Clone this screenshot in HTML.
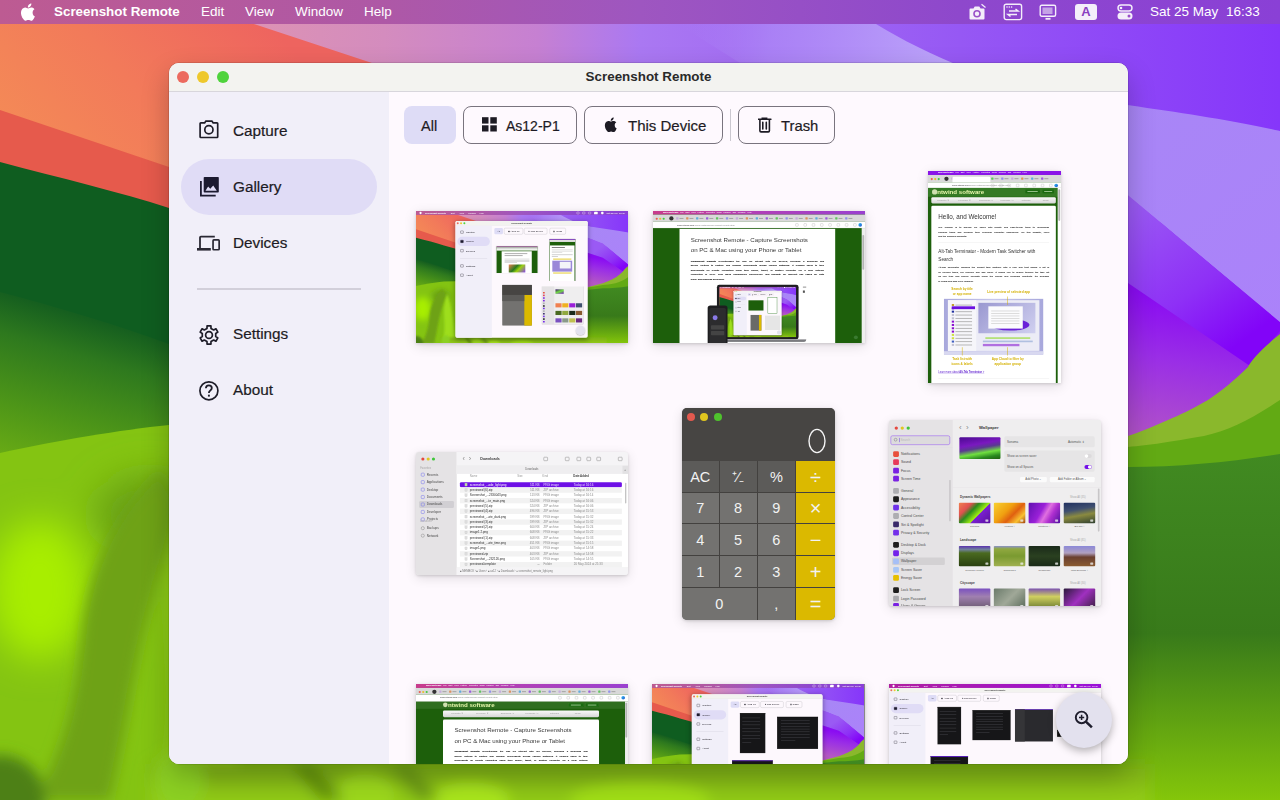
<!DOCTYPE html>
<html><head><meta charset="utf-8">
<style>
*{box-sizing:border-box;margin:0;padding:0}
html,body{width:1280px;height:800px;overflow:hidden;font-family:"Liberation Sans",sans-serif}
body{position:relative;background:#8a40f0}
.abs{position:absolute}
#wp{position:absolute;left:0;top:0}
.menubar{position:absolute;left:0;top:0;width:1280px;height:24px;background:linear-gradient(90deg,#bd5b92 0%,#ae58a6 30%,#9e56c0 50%,#8e48cc 75%,#8a40d6 100%);color:#fff;font-size:13.5px}
.menubar span{position:absolute;top:4px;line-height:16px;white-space:nowrap}
.win{position:absolute;left:169px;top:63px;width:959px;height:701px;border-radius:10px;overflow:hidden;background:#fef9fe;box-shadow:0 0 0 0.5px rgba(0,0,0,.2),0 12px 28px rgba(0,0,0,.24)}
.titlebar{position:absolute;left:0;top:0;width:959px;height:29px;background:#f3f3f0;border-bottom:1px solid #d8d6dc}
.tl{position:absolute;top:8px;width:12px;height:12px;border-radius:50%}
.title{position:absolute;left:0;top:6px;width:959px;text-align:center;font-weight:bold;font-size:13.4px;color:#2a2a2a;line-height:16px}
.sidebar{position:absolute;left:0;top:29px;width:220px;height:672px;background:#f1eff9}
.nav{position:absolute;left:12px;width:196px;height:56px;border-radius:28px}
.nav.sel{background:#e0dcf6}
.nav svg{position:absolute;left:17px;top:18px}
.nav span{position:absolute;left:52px;top:19px;font-size:15.3px;line-height:18px;color:#1d1b24;-webkit-text-stroke:.2px #1d1b24}
.main{position:absolute;left:220px;top:29px;width:739px;height:672px;background:#fef9fe;overflow:hidden}
.btn{position:absolute;top:14px;height:38px;border-radius:8px;border:1px solid #79747e;font-size:14.5px;color:#1d1b24}
.btn span{position:absolute;top:11px;line-height:17px;white-space:nowrap;-webkit-text-stroke:.2px #1d1b24}
.thumb{position:absolute;overflow:hidden;box-shadow:0 1px 3px rgba(0,0,0,.15),0 3px 12px rgba(0,0,0,.12)}
.fab{position:absolute;left:887px;top:629px;width:56px;height:56px;border-radius:50%;background:#e3e1ee;box-shadow:0 3px 8px rgba(0,0,0,.3)}
</style></head>
<body>
<svg id="wp" width="1280" height="800" viewBox="0 0 1280 800">
<defs>
<symbol id="wall" viewBox="0 0 1280 800">
  <defs>
    <linearGradient id="gTop" x1="0" y1="0" x2="1280" y2="0" gradientUnits="userSpaceOnUse">
      <stop offset="0.2" stop-color="#dc92b4"/>
      <stop offset="0.3" stop-color="#d48cbe"/>
      <stop offset="0.42" stop-color="#c680d2"/>
      <stop offset="0.5" stop-color="#aa78f2"/>
      <stop offset="0.75" stop-color="#9658f4"/>
      <stop offset="1" stop-color="#8636fa"/>
    </linearGradient>
    <linearGradient id="gOr" x1="20" y1="170" x2="230" y2="-20" gradientUnits="userSpaceOnUse">
      <stop offset="0" stop-color="#f48c56"/>
      <stop offset="0.5" stop-color="#f27a5a"/>
      <stop offset="1" stop-color="#ee645f"/>
    </linearGradient>
    <linearGradient id="gGreen" x1="0" y1="292" x2="-50" y2="460" gradientUnits="userSpaceOnUse">
      <stop offset="0" stop-color="#165f1f"/>
      <stop offset="0.22" stop-color="#2e791e"/>
      <stop offset="0.6" stop-color="#4e9618"/>
      <stop offset="1" stop-color="#72b214"/>
    </linearGradient>
    <linearGradient id="gLav" x1="1100" y1="100" x2="1280" y2="330" gradientUnits="userSpaceOnUse">
      <stop offset="0" stop-color="#a886f6"/>
      <stop offset="1" stop-color="#ab82fa"/>
    </linearGradient>
    <linearGradient id="gMag" x1="1128" y1="290" x2="1100" y2="440" gradientUnits="userSpaceOnUse">
      <stop offset="0" stop-color="#8a0cf2"/>
      <stop offset="0.4" stop-color="#9a2ee6"/>
      <stop offset="1" stop-color="#b458c4"/>
    </linearGradient>
    <linearGradient id="gRG" x1="0" y1="430" x2="0" y2="800" gradientUnits="userSpaceOnUse">
      <stop offset="0" stop-color="#428c22"/>
      <stop offset="0.55" stop-color="#387a1a"/>
      <stop offset="1" stop-color="#84c60a"/>
    </linearGradient>
    <linearGradient id="gBot" x1="0" y1="0" x2="1280" y2="0" gradientUnits="userSpaceOnUse">
      <stop offset="0" stop-color="#78b41a"/>
      <stop offset="0.2" stop-color="#84bf18"/>
      <stop offset="0.28" stop-color="#6e9c16"/>
      <stop offset="0.42" stop-color="#9cd416"/>
      <stop offset="0.5" stop-color="#86bc14"/>
      <stop offset="0.7" stop-color="#92c812"/>
      <stop offset="0.88" stop-color="#80b812"/>
      <stop offset="1" stop-color="#84c40a"/>
    </linearGradient>
    <linearGradient id="gMed" x1="1128" y1="210" x2="1230" y2="350" gradientUnits="userSpaceOnUse">
      <stop offset="0" stop-color="#9a5af4"/>
      <stop offset="0.6" stop-color="#8e30f6"/>
      <stop offset="1" stop-color="#8204f8"/>
    </linearGradient>
    <linearGradient id="gWave" x1="680" y1="0" x2="950" y2="30" gradientUnits="userSpaceOnUse">
      <stop offset="0" stop-color="#a878f4" stop-opacity="0"/>
      <stop offset="0.35" stop-color="#ac86f6" stop-opacity=".8"/>
      <stop offset="1" stop-color="#bca4fa"/>
    </linearGradient>
    <linearGradient id="gBotV" x1="0" y1="764" x2="0" y2="800" gradientUnits="userSpaceOnUse">
      <stop offset="0" stop-color="#7cac18"/>
      <stop offset="1" stop-color="#92cc16"/>
    </linearGradient>
    <filter id="fb2" x="-50%" y="-50%" width="200%" height="200%"><feGaussianBlur stdDeviation="7"/></filter>
    <filter id="fb" x="-50%" y="-50%" width="200%" height="200%"><feGaussianBlur stdDeviation="18"/></filter>
    <radialGradient id="gLime1" cx="45" cy="585" r="120" gradientUnits="userSpaceOnUse">
      <stop offset="0" stop-color="#a8ea08"/>
      <stop offset="1" stop-color="#a8ea08" stop-opacity="0"/>
    </radialGradient>
    <radialGradient id="gLime2" cx="160" cy="660" r="90" gradientUnits="userSpaceOnUse">
      <stop offset="0" stop-color="#a2e010"/>
      <stop offset="1" stop-color="#a2e010" stop-opacity="0"/>
    </radialGradient>
  </defs>
  <rect width="1280" height="800" fill="#8e44f2"/>
  <path d="M0 0 H1280 V260 L0 260 Z" fill="url(#gTop)"/>
  <path d="M640 0 L838 0 C900 40 1000 110 1280 131 L1280 324 C1220 270 1180 240 1163 224 C1000 120 860 90 740 63 Z" fill="url(#gWave)"/>
  <path d="M1000 86 C1050 96 1200 112 1280 131 L1280 322 L1128 195 L1000 150 Z" fill="url(#gLav)"/>
  <!-- orange band -->
  <path d="M0 -60 L254 24 L372 63 L1000 270 L1000 800 L0 800 Z" fill="url(#gOr)"/>
  <!-- red band -->
  <path d="M0 110 L169 167 L1000 447 L1000 800 L0 800 Z" fill="#e65a4c"/>
  <!-- green -->
  <path d="M0 162 C60 178 120 192 169 208 L700 355 L1000 440 L1000 800 L0 800 Z" fill="#0f5d20"/>
  <path d="M0 292 C60 308 120 326 169 344 L700 520 L1000 600 L1000 800 L0 800 Z" fill="url(#gGreen)"/>
<!-- medium purple -->
  <path d="M1000 150 L1128 195 L1280 322 L1280 345 L1248 367 L1128 284 L1000 240 Z" fill="url(#gMed)"/>
  <!-- deep purple / magenta -->
  <path d="M1000 240 L1128 283 L1250 366 L1280 331 L1280 800 L1000 800 Z" fill="url(#gMag)"/>
  <!-- right green hill -->
  <path d="M1280 334 C1260 350 1250 362 1248 367 C1235 380 1220 392 1208 400 C1190 410 1180 415 1168 420 C1150 428 1140 432 1128 436 L1000 470 L1000 800 L1280 800 Z" fill="#8ab82c"/>
  <path d="M1280 400 C1250 420 1230 430 1204 436 C1170 442 1150 445 1128 447 L1000 470 L1000 800 L1280 800 Z" fill="#62aa14"/>
  <path d="M1280 454 C1230 462 1180 467 1128 467 L1000 480 L1000 800 L1280 800 Z" fill="url(#gRG)"/>
  <!-- lime swirls left -->
  <path d="M0 453 C60 440 120 430 169 425 L1000 410 L1000 800 L0 800 Z" fill="#84c412"/>
  <g filter="url(#fb)">
  <ellipse cx="150" cy="515" rx="55" ry="40" fill="#68a012"/>
  <ellipse cx="40" cy="590" rx="50" ry="70" fill="#a8ee06"/>
  </g>
  <g filter="url(#fb2)">
  <path d="M160 470 C120 510 90 560 82 630 C76 700 64 750 34 800 L110 800 C125 740 135 660 150 610 C160 570 170 540 175 500 Z" fill="#6ea212"/>
  <ellipse cx="0" cy="800" rx="45" ry="45" fill="#4e8018"/>
  <path d="M190 500 C160 560 170 620 172 690 C172 730 168 760 160 780 L240 780 C230 700 220 600 190 500 Z" fill="#9ede1c"/>
  </g>
  <g filter="url(#fb2)">
  <rect x="150" y="764" width="1000" height="60" fill="url(#gBotV)"/>
  <ellipse cx="180" cy="780" rx="25" ry="30" fill="#8cd022"/>
  <ellipse cx="365" cy="795" rx="30" ry="22" fill="#9cd81a"/>
  <ellipse cx="470" cy="800" rx="40" ry="18" fill="#a8e41a"/>
  <ellipse cx="640" cy="800" rx="70" ry="18" fill="#a0de12"/>
  <path d="M290 764 L312 764 L345 800 L320 800 Z" fill="#64920f"/>
  <path d="M390 764 L410 764 L440 800 L418 800 Z" fill="#6c9a12"/>
  </g>

</symbol>
</defs>
<use href="#wall" x="0" y="0" width="1280" height="800"/>
</svg>

<div class="menubar">
  <svg class="abs" style="left:19.5px;top:3px" width="15.5" height="17.6" viewBox="0 0 15 17"><path fill="#fff" d="M12.2 9.1c0-2 1.7-3 1.8-3.1-1-1.4-2.5-1.6-3-1.6-1.3-.1-2.5.8-3.1.8-.7 0-1.7-.8-2.8-.8C3.7 4.5 2.4 5.3 1.7 6.6.2 9.200 1.300 13.000 2.800 15.100c.7 1 1.500 2.100 2.600 2.100 1 0 1.400-.700 2.700-.700 1.200 0 1.600.700 2.700.700s1.800-1 2.500-2c.8-1.100 1.100-2.200 1.100-2.300 0 0-2.200-.8-2.200-3.300zM10.100 3.100c.6-.7 1-1.700.9-2.700-.9 0-1.900.6-2.500 1.300-.6.6-1 1.600-.9 2.600 1 .1 1.900-.5 2.500-1.200z"/></svg>
  <span style="left:54px;font-weight:bold;font-size:13.4px">Screenshot Remote</span>
  <span style="left:201px">Edit</span>
  <span style="left:245px">View</span>
  <span style="left:295px">Window</span>
  <span style="left:364px">Help</span>
  <svg class="abs" style="left:968px;top:3px" width="19" height="18" viewBox="0 0 19 18"><path d="M2.5 5.5 Q1.5 5.5 1.5 6.5 V15.5 Q1.5 16.6 2.6 16.6 H15.4 Q16.5 16.6 16.5 15.5 V6.5 Q16.5 5.5 15.5 5.5 H12.5 L11.3 3.6 H6.7 L5.5 5.5 Z" fill="#f4eefa"/><circle cx="9" cy="10.8" r="3" fill="none" stroke="#9a50c8" stroke-width="1.6"/><path d="M13.5 1.2 L17.5 4.5" stroke="#f4eefa" stroke-width="1.2"/></svg>
  <svg class="abs" style="left:1003px;top:3px" width="20" height="18" viewBox="0 0 20 18"><rect x="1.2" y="1.2" width="17.4" height="15.4" rx="2" fill="none" stroke="#f4eefa" stroke-width="1.4"/><circle cx="4" cy="4" r=".8" fill="#f4eefa"/><circle cx="6.3" cy="4" r=".8" fill="#f4eefa"/><circle cx="8.6" cy="4" r=".8" fill="#f4eefa"/><path d="M6 8 H15 L12.5 6 M14 11.5 H5 L7.5 13.5" fill="none" stroke="#f4eefa" stroke-width="1.5"/></svg>
  <svg class="abs" style="left:1039px;top:4px" width="18" height="17" viewBox="0 0 18 17"><rect x="1.2" y="1.2" width="15.4" height="11" rx="1.5" fill="none" stroke="#f4eefa" stroke-width="1.4"/><rect x="3.5" y="3.5" width="10" height="6.5" fill="#f4eefa" opacity=".55"/><path d="M6.5 14.8 H11.5" stroke="#f4eefa" stroke-width="1.8"/></svg>
  <div class="abs" style="left:1075px;top:4px;width:22px;height:16px;border-radius:3px;background:#f4eefa;color:#8a40c0;font-weight:bold;font-size:13px;line-height:16px;text-align:center">A</div>
  <svg class="abs" style="left:1117px;top:4px" width="16" height="16" viewBox="0 0 16 16"><rect x="1" y="1" width="14" height="6" rx="3" fill="none" stroke="#f4eefa" stroke-width="1.4"/><circle cx="4" cy="4" r="1.3" fill="#f4eefa"/><rect x="0.5" y="8.5" width="15" height="7" rx="3.5" fill="#f4eefa"/><circle cx="12" cy="12" r="1.5" fill="#9a50c8"/></svg>
  <span style="left:1150px">Sat 25 May</span>
  <span style="left:1226px">16:33</span>
</div>

<div class="win">
  <div class="titlebar">
    <div class="tl" style="left:8px;background:#ec6a5e"></div>
    <div class="tl" style="left:28px;background:#eec82c"></div>
    <div class="tl" style="left:48px;background:#4fd33c"></div>
    <div class="title">Screenshot Remote</div>
  </div>
  <div class="sidebar">
    <div class="nav" style="top:11px">
      <svg style="left:18px;top:17px" width="20" height="19" viewBox="0 0 20 19"><path d="M1.1 3.6 Q1.1 2.9 1.8 2.9 H5.6 L6.9 1.1 H12.9 L14.2 2.9 H18 Q18.7 2.9 18.7 3.6 V16.7 Q18.7 17.5 18 17.5 H1.8 Q1.1 17.5 1.1 16.7 Z" fill="none" stroke="#1e1d29" stroke-width="1.7" stroke-linejoin="round"/><circle cx="9.9" cy="9.75" r="4.1" fill="none" stroke="#1e1d29" stroke-width="1.7"/></svg>
      <span>Capture</span></div>
    <div class="nav sel" style="top:67px">
      <svg style="left:18px;top:17px" width="22" height="22" viewBox="0 0 22 22"><path d="M4.7 1.8 Q4.7 1 5.5 1 H19 Q19.8 1 19.8 1.8 V15.8 Q19.8 16.6 19 16.6 H5.5 Q4.7 16.6 4.7 15.8 Z" fill="#1c1a30"/><path d="M6.5 14.7 L9.1 10.6 L11.3 12.8 L14.2 9.4 L17.8 14.7 Z" fill="#e0dcf6"/><path d="M1.9 5 V19.7 H16.7" fill="none" stroke="#1c1a30" stroke-width="1.8"/></svg>
      <span>Gallery</span></div>
    <div class="nav" style="top:123px">
      <svg style="left:15px;top:20px" width="26" height="18" viewBox="0 0 26 18"><path d="M26 0" /><path d="M18.8 1.6 H4.9 Q4 1.6 4 2.5 V13.2" fill="none" stroke="#2a2834" stroke-width="1.8"/><rect x="1" y="13" width="13.8" height="2.6" fill="#2a2834"/><rect x="17.05" y="4.85" width="6.1" height="9.9" rx="0.8" fill="none" stroke="#2a2834" stroke-width="1.7"/></svg>
      <span>Devices</span></div>
    <div class="abs" style="left:28px;top:196px;width:164px;height:2px;background:#d2cfda"></div>
    <div class="nav" style="top:214px">
      <svg style="left:18px;top:18.7px;overflow:visible" width="20" height="20" viewBox="0 0 20 20"><path d="M7.98 3.40 L8.07 0.90 L11.93 0.90 L12.02 3.40 L14.71 4.95 L16.91 3.78 L18.84 7.13 L16.72 8.45 L16.72 11.55 L18.84 12.87 L16.91 16.22 L14.71 15.05 L12.02 16.60 L11.93 19.10 L8.07 19.10 L7.98 16.60 L5.29 15.05 L3.09 16.22 L1.16 12.87 L3.28 11.55 L3.28 8.45 L1.16 7.13 L3.09 3.78 L5.29 4.95Z" fill="none" stroke="#1e1d29" stroke-width="1.7" stroke-linejoin="round"/><circle cx="10" cy="10" r="3.4" fill="none" stroke="#1e1d29" stroke-width="1.7"/></svg>
      <span>Settings</span></div>
    <div class="nav" style="top:270px">
      <svg style="left:17px;top:18px;overflow:visible" width="22" height="22" viewBox="0 0 22 22"><circle cx="10.9" cy="10.8" r="9.0" fill="none" stroke="#1e1d29" stroke-width="1.7"/><path d="M7.9 8.3 Q7.9 5.3 10.9 5.3 Q13.8 5.3 13.8 8 Q13.8 9.4 12.3 10.4 Q10.9 11.3 10.9 13" fill="none" stroke="#1e1d29" stroke-width="1.8"/><rect x="9.95" y="14.7" width="1.9" height="1.9" fill="#1e1d29"/></svg>
      <span>About</span></div>
  </div>
  <div class="main">
    <div class="btn" style="left:15px;width:52px;border:none;background:#dedcf6"><span style="left:17px;top:12px">All</span></div>
    <div class="btn" style="left:74px;width:114px">
      <svg class="abs" style="left:18px;top:10px" width="16" height="16" viewBox="0 0 16 16"><rect x="0" y="0.2" width="6.5" height="6.4" fill="#1d1b24"/><rect x="8.3" y="0.2" width="6.5" height="6.4" fill="#1d1b24"/><rect x="0" y="8.3" width="6.5" height="6.2" fill="#1d1b24"/><rect x="8.3" y="8.3" width="6.5" height="6.2" fill="#1d1b24"/></svg>
      <span style="left:42px;font-size:14px">As12-P1</span></div>
    <div class="btn" style="left:195px;width:139px">
      <svg class="abs" style="left:18.8px;top:10px" width="13.2" height="15" viewBox="0 0 15 17"><path fill="#1d1b24" d="M12.2 9.1c0-2 1.7-3 1.8-3.1-1-1.4-2.5-1.6-3-1.6-1.3-.1-2.5.8-3.1.8-.7 0-1.7-.8-2.8-.8C3.7 4.5 2.4 5.3 1.7 6.6.2 9.2 1.3 13 2.8 15.1c.7 1 1.5 2.1 2.6 2.1 1 0 1.4-.7 2.7-.7 1.2 0 1.6.7 2.7.7s1.8-1 2.5-2c.8-1.1 1.1-2.2 1.1-2.3 0 0-2.2-.8-2.2-3.3zM10.1 3.1c.6-.7 1-1.7.9-2.7-.9 0-1.9.6-2.5 1.3-.6.6-1 1.6-.9 2.6 1 .1 1.9-.5 2.5-1.2z"/></svg>
      <span style="left:43px;font-size:15px;top:10px">This Device</span></div>
    <div class="abs" style="left:341px;top:17px;width:1px;height:32px;background:#cbc8d0"></div>
    <div class="btn" style="left:349px;width:97px">
      <svg class="abs" style="left:19px;top:10px" width="16" height="17" viewBox="0 0 16 17"><path d="M0.2 2.3 H12.9 M4.3 2.3 V1.2 H8.6 V2.3 M1.9 2.3 V13.8 Q1.9 14.9 3 14.9 H10.3 Q11.4 14.9 11.4 13.8 V2.3 M4.8 5.4 V11.9 M8.3 5.4 V11.9" fill="none" stroke="#1d1b24" stroke-width="1.6" stroke-linecap="round"/></svg>
      <span style="left:42px;font-size:14.8px">Trash</span></div>

    <div class="thumb" id="t1" style="left:27px;top:119px;width:212px;height:132px;background:#888"><div class="abs" style="left:0;top:0;width:1280px;height:800px;transform:scale(0.165625);transform-origin:0 0"><svg class="abs" style="left:0;top:0" width="1280" height="800" viewBox="0 0 1280 800"><use href="#wall" width="1280" height="800"/></svg><div class="abs" style="left:0;top:0;width:1280px;height:24px;background:linear-gradient(90deg,#bd5b92 0%,#ae58a6 30%,#9e56c0 50%,#8e48cc 75%,#8a40d6 100%);color:#fff;font-size:13.5px;line-height:24px"><div class="abs" style="left:21px;top:5px;width:13px;height:14px;border-radius:50% 50% 45% 45%;background:#fff"></div><span class="abs" style="left:54px;font-weight:bold">Screenshot Remote</span><span class="abs" style="left:210px">Edit</span><span class="abs" style="left:262px">View</span><span class="abs" style="left:314px">Window</span><span class="abs" style="left:382px">Help</span><div class="abs" style="left:970px;top:5px;width:16px;height:14px;border:2px solid #fff;border-radius:3px"></div><div class="abs" style="left:1005px;top:5px;width:16px;height:14px;border:2px solid #fff;border-radius:3px"></div><div class="abs" style="left:1040px;top:5px;width:16px;height:14px;border:2px solid #fff;border-radius:3px"></div><div class="abs" style="left:1075px;top:4px;width:22px;height:16px;border-radius:3px;background:#fff"></div><div class="abs" style="left:1118px;top:5px;width:14px;height:14px;border-radius:4px;background:#fff"></div><span class="abs" style="left:1150px">Sat 25 May&nbsp;&nbsp;16:33</span></div><div class="abs" style="left:238px;top:60px;width:799px;height:705px;border-radius:10px;overflow:hidden;background:#fdf8fd;box-shadow:0 8px 30px rgba(0,0,0,.35);"><div class="abs" style="left:0;top:0;width:799px;height:28px;background:#f3f3f0;border-bottom:1px solid #d8d6dc"></div><div class="abs" style="left:8px;top:8px;width:12px;height:12px;border-radius:50%;background:#ec6a5e"></div><div class="abs" style="left:28px;top:8px;width:12px;height:12px;border-radius:50%;background:#eec82c"></div><div class="abs" style="left:48px;top:8px;width:12px;height:12px;border-radius:50%;background:#4fd33c"></div><div class="abs" style="left:0;top:6px;width:799px;text-align:center;font-weight:bold;font-size:13.4px;color:#3b3b3b">Screenshot Remote</div><div class="abs" style="left:0;top:29px;width:220px;height:676px;background:#f1eff9"></div><div class="abs" style="left:12px;top:96px;width:196px;height:56px;border-radius:28px;background:#e0dcf6"></div><div class="abs" style="left:30px;top:59px;width:19px;height:17px;border:2px solid #2a2834;border-radius:3px;"></div><div class="abs" style="left:64px;top:59px;font-size:15.3px;line-height:18px;color:#1d1b24">Capture</div><div class="abs" style="left:30px;top:115px;width:19px;height:17px;border:2px solid #2a2834;border-radius:3px;background:#1c1a30;"></div><div class="abs" style="left:64px;top:115px;font-size:15.3px;line-height:18px;color:#1d1b24">Gallery</div><div class="abs" style="left:30px;top:171px;width:19px;height:17px;border:2px solid #2a2834;border-radius:3px;"></div><div class="abs" style="left:64px;top:171px;font-size:15.3px;line-height:18px;color:#1d1b24">Devices</div><div class="abs" style="left:30px;top:263px;width:19px;height:17px;border:2px solid #2a2834;border-radius:3px;"></div><div class="abs" style="left:64px;top:263px;font-size:15.3px;line-height:18px;color:#1d1b24">Settings</div><div class="abs" style="left:30px;top:319px;width:19px;height:17px;border:2px solid #2a2834;border-radius:3px;"></div><div class="abs" style="left:64px;top:319px;font-size:15.3px;line-height:18px;color:#1d1b24">About</div><div class="abs" style="left:28px;top:225px;width:164px;height:2px;background:#d2cfda"></div><div class="abs" style="left:235px;top:43px;width:52px;height:38px;border-radius:8px;background:#dedcf6;font-size:14.5px;line-height:38px;text-align:center;color:#1d1b24">All</div><div class="abs" style="left:294px;top:43px;width:114px;height:38px;border-radius:8px;border:1px solid #79747e;font-size:14.5px;line-height:36px;text-align:center;color:#1d1b24">&#9638; As12-P1</div><div class="abs" style="left:415px;top:43px;width:139px;height:38px;border-radius:8px;border:1px solid #79747e;font-size:14.5px;line-height:36px;text-align:center;color:#1d1b24">&#9679; This Device</div><div class="abs" style="left:569px;top:43px;width:97px;height:38px;border-radius:8px;border:1px solid #79747e;font-size:14.5px;line-height:36px;text-align:center;color:#1d1b24">&#9641; Trash</div><div class="abs" style="left:247px;top:153px;width:250px;height:162px;overflow:hidden;box-shadow:0 1px 4px rgba(0,0,0,.3)"><div class="abs" style="left:0px;top:0px;width:250px;height:162px;background:#1d5f0b"></div><div class="abs" style="left:0px;top:0px;width:250px;height:6px;background:#b040b0"></div><div class="abs" style="left:0px;top:6px;width:250px;height:11px;background:#d8d8d8"></div><div class="abs" style="left:0px;top:17px;width:250px;height:9px;background:#fff"></div><div class="abs" style="left:32px;top:30px;width:182px;height:162px;background:#fff"></div><div class="abs" style="left:50px;top:43px;width:137px;height:4px;background:#888"></div><div class="abs" style="left:50px;top:55px;width:109px;height:4px;background:#888"></div><div class="abs" style="left:50px;top:76px;width:150px;height:2px;background:#999"></div><div class="abs" style="left:50px;top:83px;width:150px;height:2px;background:#999"></div><div class="abs" style="left:50px;top:90px;width:150px;height:2px;background:#999"></div><div class="abs" style="left:50px;top:97px;width:75px;height:2px;background:#999"></div><div class="abs" style="left:75px;top:110px;width:100px;height:48px;background:linear-gradient(135deg,#f08050,#2a7a20 40%,#9ad010 60%,#8a40f0)"></div></div><div class="abs" style="left:567px;top:108px;width:158px;height:254px;overflow:hidden;box-shadow:0 1px 4px rgba(0,0,0,.3)"><div class="abs" style="left:0px;top:0px;width:158px;height:254px;background:#1d5f0b"></div><div class="abs" style="left:0px;top:0px;width:158px;height:6px;background:#8a20e0"></div><div class="abs" style="left:0px;top:6px;width:158px;height:13px;background:#e0e0e0"></div><div class="abs" style="left:4px;top:40px;width:148px;height:254px;background:#fff"></div><div class="abs" style="left:15px;top:50px;width:79px;height:5px;background:#666"></div><div class="abs" style="left:15px;top:66px;width:126px;height:2px;background:#aaa"></div><div class="abs" style="left:15px;top:73px;width:126px;height:2px;background:#aaa"></div><div class="abs" style="left:15px;top:80px;width:63px;height:2px;background:#aaa"></div><div class="abs" style="left:15px;top:96px;width:126px;height:2px;background:#777"></div><div class="abs" style="left:15px;top:104px;width:37px;height:2px;background:#777"></div><div class="abs" style="left:18px;top:132px;width:120px;height:66px;background:#9a88d8"></div><div class="abs" style="left:63px;top:139px;width:66px;height:40px;background:#f4f4f8"></div><div class="abs" style="left:23px;top:119px;width:110px;height:7px;background:#e0c000;opacity:.7"></div><div class="abs" style="left:23px;top:203px;width:110px;height:7px;background:#e0c000;opacity:.7"></div></div><div class="abs" style="left:282px;top:385px;width:180px;height:248px;overflow:hidden"><div class="abs" style="left:0px;top:0px;width:180px;height:248px;background:#737270;border-radius:4px"></div><div class="abs" style="left:0px;top:0px;width:180px;height:62px;background:#474543"></div><div class="abs" style="left:134px;top:62px;width:46px;height:186px;background:#dbb900"></div><div class="abs" style="left:0px;top:62px;width:134px;height:37px;background:#5c5b59"></div></div><div class="abs" style="left:522px;top:395px;width:250px;height:228px;overflow:hidden;box-shadow:0 1px 4px rgba(0,0,0,.3)"><div class="abs" style="left:0px;top:0px;width:250px;height:228px;background:#efeeef"></div><div class="abs" style="left:0px;top:0px;width:75px;height:228px;background:#e5e3e5"></div><div class="abs" style="left:7px;top:34px;width:10px;height:9px;background:#e8503c"></div><div class="abs" style="left:7px;top:50px;width:10px;height:9px;background:#e63c5c"></div><div class="abs" style="left:7px;top:66px;width:10px;height:9px;background:#7a22e2"></div><div class="abs" style="left:7px;top:82px;width:10px;height:9px;background:#7a22e2"></div><div class="abs" style="left:7px;top:98px;width:10px;height:9px;background:#adadb1"></div><div class="abs" style="left:7px;top:114px;width:10px;height:9px;background:#1d1d1d"></div><div class="abs" style="left:7px;top:129px;width:10px;height:9px;background:#6e32ea"></div><div class="abs" style="left:7px;top:145px;width:10px;height:9px;background:#adadb1"></div><div class="abs" style="left:7px;top:161px;width:10px;height:9px;background:#3a2a6a"></div><div class="abs" style="left:7px;top:177px;width:10px;height:9px;background:#7430ea"></div><div class="abs" style="left:7px;top:193px;width:10px;height:9px;background:#1d1d1d"></div><div class="abs" style="left:7px;top:209px;width:10px;height:9px;background:#7422ea"></div><div class="abs" style="left:82px;top:18px;width:50px;height:27px;background:linear-gradient(160deg,#3a0a70,#70e040,#7010c0)"></div><div class="abs" style="left:82px;top:102px;width:37px;height:25px;background:#f08050"></div><div class="abs" style="left:123px;top:102px;width:37px;height:25px;background:#f0b020"></div><div class="abs" style="left:165px;top:102px;width:37px;height:25px;background:#9a20d8"></div><div class="abs" style="left:206px;top:102px;width:37px;height:25px;background:#405070"></div><div class="abs" style="left:82px;top:148px;width:37px;height:25px;background:#4a6a20"></div><div class="abs" style="left:123px;top:148px;width:37px;height:25px;background:#90a840"></div><div class="abs" style="left:165px;top:148px;width:37px;height:25px;background:#1a2a1a"></div><div class="abs" style="left:206px;top:148px;width:37px;height:25px;background:#8a5a30"></div><div class="abs" style="left:82px;top:193px;width:37px;height:25px;background:#7a50c0"></div><div class="abs" style="left:123px;top:193px;width:37px;height:25px;background:#8a9a8a"></div><div class="abs" style="left:165px;top:193px;width:37px;height:25px;background:#c0c050"></div><div class="abs" style="left:206px;top:193px;width:37px;height:25px;background:#6a2a80"></div></div><div class="abs" style="left:727px;top:633px;width:56px;height:56px;border-radius:50%;background:#e3e1ee;box-shadow:0 3px 8px rgba(0,0,0,.3)"></div></div></div></div>
    <div class="thumb" id="t2" style="left:264px;top:119px;width:212px;height:132px;background:#1a6a12"><div class="abs" style="left:0;top:0;width:1280px;height:800px;transform:scale(.165625);transform-origin:0 0;background:#1d5f0b"><div class="abs" style="left:0px;top:0px;width:1280px;height:22px;background:linear-gradient(90deg,#c83c8c 0%,#b040b8 50%,#9a40d0 100%)"></div><div class="abs" style="left:60px;top:2px;font-size:13px;line-height:18px;color:#fff;white-space:nowrap"><b>Microsoft Edge</b>&nbsp;&nbsp;&nbsp;File&nbsp;&nbsp;&nbsp;Edit&nbsp;&nbsp;&nbsp;View&nbsp;&nbsp;&nbsp;History&nbsp;&nbsp;&nbsp;Favorites&nbsp;&nbsp;&nbsp;Tools&nbsp;&nbsp;&nbsp;Profiles&nbsp;&nbsp;&nbsp;Tab&nbsp;&nbsp;&nbsp;Window&nbsp;&nbsp;&nbsp;Help</div><div class="abs" style="left:0px;top:22px;width:1280px;height:43px;background:#d9d9d9"></div><div class="abs" style="left:16px;top:40px;width:13px;height:13px;border-radius:50%;background:#ec5a50"></div><div class="abs" style="left:37px;top:40px;width:13px;height:13px;border-radius:50%;background:#e8c028"></div><div class="abs" style="left:58px;top:40px;width:13px;height:13px;border-radius:50%;background:#40c840"></div><div class="abs" style="left:98px;top:32px;width:26px;height:26px;border-radius:50%;background:#333"></div><div class="abs" style="left:140px;top:37px;width:14px;height:14px;border-radius:3px;background:#c0a0e0;opacity:.8"></div><div class="abs" style="left:160px;top:42px;width:24px;height:5px;background:#999"></div><div class="abs" style="left:200px;top:37px;width:14px;height:14px;border-radius:3px;background:#e08040;opacity:.8"></div><div class="abs" style="left:220px;top:42px;width:24px;height:5px;background:#999"></div><div class="abs" style="left:260px;top:37px;width:14px;height:14px;border-radius:3px;background:#40a0e0;opacity:.8"></div><div class="abs" style="left:280px;top:42px;width:24px;height:5px;background:#999"></div><div class="abs" style="left:320px;top:37px;width:14px;height:14px;border-radius:3px;background:#8a40e0;opacity:.8"></div><div class="abs" style="left:340px;top:42px;width:24px;height:5px;background:#999"></div><div class="abs" style="left:380px;top:37px;width:14px;height:14px;border-radius:3px;background:#40c040;opacity:.8"></div><div class="abs" style="left:400px;top:42px;width:24px;height:5px;background:#999"></div><div class="abs" style="left:440px;top:37px;width:14px;height:14px;border-radius:3px;background:#8080f0;opacity:.8"></div><div class="abs" style="left:460px;top:42px;width:24px;height:5px;background:#999"></div><div class="abs" style="left:500px;top:37px;width:14px;height:14px;border-radius:3px;background:#c0a0e0;opacity:.8"></div><div class="abs" style="left:520px;top:42px;width:24px;height:5px;background:#999"></div><div class="abs" style="left:560px;top:37px;width:14px;height:14px;border-radius:3px;background:#e08040;opacity:.8"></div><div class="abs" style="left:580px;top:42px;width:24px;height:5px;background:#999"></div><div class="abs" style="left:620px;top:37px;width:14px;height:14px;border-radius:3px;background:#40a0e0;opacity:.8"></div><div class="abs" style="left:640px;top:42px;width:24px;height:5px;background:#999"></div><div class="abs" style="left:680px;top:37px;width:14px;height:14px;border-radius:3px;background:#8a40e0;opacity:.8"></div><div class="abs" style="left:700px;top:42px;width:24px;height:5px;background:#999"></div><div class="abs" style="left:740px;top:37px;width:14px;height:14px;border-radius:3px;background:#40c040;opacity:.8"></div><div class="abs" style="left:760px;top:42px;width:24px;height:5px;background:#999"></div><div class="abs" style="left:800px;top:37px;width:14px;height:14px;border-radius:3px;background:#8080f0;opacity:.8"></div><div class="abs" style="left:820px;top:42px;width:24px;height:5px;background:#999"></div><div class="abs" style="left:860px;top:37px;width:14px;height:14px;border-radius:3px;background:#c0a0e0;opacity:.8"></div><div class="abs" style="left:880px;top:42px;width:24px;height:5px;background:#999"></div><div class="abs" style="left:920px;top:37px;width:14px;height:14px;border-radius:3px;background:#e08040;opacity:.8"></div><div class="abs" style="left:940px;top:42px;width:24px;height:5px;background:#999"></div><div class="abs" style="left:980px;top:37px;width:14px;height:14px;border-radius:3px;background:#40a0e0;opacity:.8"></div><div class="abs" style="left:1000px;top:42px;width:24px;height:5px;background:#999"></div><div class="abs" style="left:1040px;top:37px;width:14px;height:14px;border-radius:3px;background:#8a40e0;opacity:.8"></div><div class="abs" style="left:1060px;top:42px;width:24px;height:5px;background:#999"></div><div class="abs" style="left:1100px;top:37px;width:14px;height:14px;border-radius:3px;background:#40c040;opacity:.8"></div><div class="abs" style="left:1120px;top:42px;width:24px;height:5px;background:#999"></div><div class="abs" style="left:1160px;top:37px;width:14px;height:14px;border-radius:3px;background:#8080f0;opacity:.8"></div><div class="abs" style="left:1180px;top:42px;width:24px;height:5px;background:#999"></div><div class="abs" style="left:0px;top:65px;width:1280px;height:38px;background:#fff;border-bottom:1px solid #ccc"></div><div class="abs" style="left:145px;top:75px;font-size:14px;color:#888;white-space:nowrap"><span style="color:#333">www.ntwind.com</span>/cross-platform/screenshot-remote.html</div><div class="abs" style="left:860px;top:75px;width:18px;height:18px;border:2px solid #aaa;border-radius:4px"></div><div class="abs" style="left:910px;top:75px;width:18px;height:18px;border:2px solid #aaa;border-radius:4px"></div><div class="abs" style="left:960px;top:75px;width:18px;height:18px;border:2px solid #aaa;border-radius:4px"></div><div class="abs" style="left:1010px;top:75px;width:18px;height:18px;border:2px solid #aaa;border-radius:4px"></div><div class="abs" style="left:1060px;top:75px;width:18px;height:18px;border:2px solid #aaa;border-radius:4px"></div><div class="abs" style="left:1110px;top:75px;width:18px;height:18px;border:2px solid #aaa;border-radius:4px"></div><div class="abs" style="left:1160px;top:75px;width:18px;height:18px;border:2px solid #aaa;border-radius:4px"></div><div class="abs" style="left:1210px;top:75px;width:18px;height:18px;border:2px solid #aaa;border-radius:4px"></div><div class="abs" style="left:1240px;top:73px;width:22px;height:22px;border-radius:50%;background:linear-gradient(135deg,#30c0f0,#2050d0)"></div><div class="abs" style="left:160px;top:108px;width:940px;height:700px;background:#fff"></div><div class="abs" style="left:228px;top:140px;width:820px;font-size:37px;line-height:65px;color:#3a3a3a;white-space:nowrap">Screenshot Remote - Capture Screenshots<br>on PC &amp; Mac using your Phone or Tablet</div><div class="abs" style="left:228px;top:287.0px;width:805px;font-size:15px;line-height:27.5px;color:#222;-webkit-text-stroke:.6px #222;white-space:nowrap;text-align:justify;text-align-last:justify;"><b>Screenshot Remote</b> revolutionizes the way we interact with our devices, providing a seamless and</div><div class="abs" style="left:228px;top:314.5px;width:805px;font-size:15px;line-height:27.5px;color:#222;-webkit-text-stroke:.6px #222;white-space:nowrap;text-align:justify;text-align-last:justify;">secure method to capture and manage screenshots across various platforms. It enables users to take</div><div class="abs" style="left:228px;top:342.0px;width:805px;font-size:15px;line-height:27.5px;color:#222;-webkit-text-stroke:.6px #222;white-space:nowrap;text-align:justify;text-align-last:justify;">screenshots on remote computers using their phone, tablet, or another computer via a local network</div><div class="abs" style="left:228px;top:369.5px;width:805px;font-size:15px;line-height:27.5px;color:#222;-webkit-text-stroke:.6px #222;white-space:nowrap;text-align:justify;text-align-last:justify;">connection or Wi-Fi. This offers unparalleled convenience and flexibility for different use cases for both</div><div class="abs" style="left:228px;top:397.0px;width:805px;font-size:15px;line-height:27.5px;color:#222;-webkit-text-stroke:.6px #222;white-space:nowrap;">home and business scenarios.</div><div class="abs" style="left:386px;top:446px;width:493px;height:329px;background:#1e1e20;border-radius:14px"></div><div class="abs" style="left:400px;top:458px;width:465px;height:305px;overflow:hidden"><div class="abs" style="left:0;top:0;width:1280px;height:800px;transform:scale(0.3633,0.3812);transform-origin:0 0"><svg class="abs" style="left:0;top:0" width="1280" height="800" viewBox="0 0 1280 800"><use href="#wall" width="1280" height="800"/></svg><div class="abs" style="left:0;top:0;width:1280px;height:24px;background:linear-gradient(90deg,#bd5b92 0%,#ae58a6 30%,#9e56c0 50%,#8e48cc 75%,#8a40d6 100%);color:#fff;font-size:13.5px;line-height:24px"><div class="abs" style="left:21px;top:5px;width:13px;height:14px;border-radius:50% 50% 45% 45%;background:#fff"></div><span class="abs" style="left:54px;font-weight:bold">Screenshot Remote</span><span class="abs" style="left:210px">Edit</span><span class="abs" style="left:262px">View</span><span class="abs" style="left:314px">Window</span><span class="abs" style="left:382px">Help</span><div class="abs" style="left:970px;top:5px;width:16px;height:14px;border:2px solid #fff;border-radius:3px"></div><div class="abs" style="left:1005px;top:5px;width:16px;height:14px;border:2px solid #fff;border-radius:3px"></div><div class="abs" style="left:1040px;top:5px;width:16px;height:14px;border:2px solid #fff;border-radius:3px"></div><div class="abs" style="left:1075px;top:4px;width:22px;height:16px;border-radius:3px;background:#fff"></div><div class="abs" style="left:1118px;top:5px;width:14px;height:14px;border-radius:4px;background:#fff"></div><span class="abs" style="left:1150px">Sat 25 May&nbsp;&nbsp;16:33</span></div><div class="abs" style="left:238px;top:60px;width:799px;height:705px;border-radius:10px;overflow:hidden;background:#fdf8fd;box-shadow:0 8px 30px rgba(0,0,0,.35);"><div class="abs" style="left:0;top:0;width:799px;height:28px;background:#f3f3f0;border-bottom:1px solid #d8d6dc"></div><div class="abs" style="left:8px;top:8px;width:12px;height:12px;border-radius:50%;background:#ec6a5e"></div><div class="abs" style="left:28px;top:8px;width:12px;height:12px;border-radius:50%;background:#eec82c"></div><div class="abs" style="left:48px;top:8px;width:12px;height:12px;border-radius:50%;background:#4fd33c"></div><div class="abs" style="left:0;top:6px;width:799px;text-align:center;font-weight:bold;font-size:13.4px;color:#3b3b3b">Screenshot Remote</div><div class="abs" style="left:0;top:29px;width:220px;height:676px;background:#f1eff9"></div><div class="abs" style="left:12px;top:96px;width:196px;height:56px;border-radius:28px;background:#e0dcf6"></div><div class="abs" style="left:30px;top:59px;width:19px;height:17px;border:2px solid #2a2834;border-radius:3px;"></div><div class="abs" style="left:64px;top:59px;font-size:15.3px;line-height:18px;color:#1d1b24">Capture</div><div class="abs" style="left:30px;top:115px;width:19px;height:17px;border:2px solid #2a2834;border-radius:3px;background:#1c1a30;"></div><div class="abs" style="left:64px;top:115px;font-size:15.3px;line-height:18px;color:#1d1b24">Gallery</div><div class="abs" style="left:30px;top:171px;width:19px;height:17px;border:2px solid #2a2834;border-radius:3px;"></div><div class="abs" style="left:64px;top:171px;font-size:15.3px;line-height:18px;color:#1d1b24">Devices</div><div class="abs" style="left:30px;top:263px;width:19px;height:17px;border:2px solid #2a2834;border-radius:3px;"></div><div class="abs" style="left:64px;top:263px;font-size:15.3px;line-height:18px;color:#1d1b24">Settings</div><div class="abs" style="left:30px;top:319px;width:19px;height:17px;border:2px solid #2a2834;border-radius:3px;"></div><div class="abs" style="left:64px;top:319px;font-size:15.3px;line-height:18px;color:#1d1b24">About</div><div class="abs" style="left:28px;top:225px;width:164px;height:2px;background:#d2cfda"></div><div class="abs" style="left:235px;top:43px;width:52px;height:38px;border-radius:8px;background:#dedcf6;font-size:14.5px;line-height:38px;text-align:center;color:#1d1b24">All</div><div class="abs" style="left:294px;top:43px;width:114px;height:38px;border-radius:8px;border:1px solid #79747e;font-size:14.5px;line-height:36px;text-align:center;color:#1d1b24">&#9638; As12-P1</div><div class="abs" style="left:415px;top:43px;width:139px;height:38px;border-radius:8px;border:1px solid #79747e;font-size:14.5px;line-height:36px;text-align:center;color:#1d1b24">&#9679; This Device</div><div class="abs" style="left:569px;top:43px;width:97px;height:38px;border-radius:8px;border:1px solid #79747e;font-size:14.5px;line-height:36px;text-align:center;color:#1d1b24">&#9641; Trash</div><div class="abs" style="left:247px;top:153px;width:250px;height:162px;background:#1d5f0b"></div><div class="abs" style="left:567px;top:108px;width:158px;height:254px;background:#fff;border:6px solid #2a7a20"></div><div class="abs" style="left:282px;top:385px;width:180px;height:248px;background:#6a6a68"></div><div class="abs" style="left:422px;top:385px;width:40px;height:248px;background:#dbb900"></div><div class="abs" style="left:522px;top:395px;width:250px;height:228px;background:#e6e6e6"></div><div class="abs" style="left:727px;top:633px;width:56px;height:56px;border-radius:50%;background:#e3e1ee;box-shadow:0 3px 8px rgba(0,0,0,.3)"></div></div></div></div><div class="abs" style="left:340px;top:775px;width:585px;height:14px;background:linear-gradient(#9a9a9e,#5a5a5e);border-radius:0 0 12px 12px"></div><div class="abs" style="left:330px;top:570px;width:120px;height:240px;background:#1e1e20;border-radius:16px"></div><div class="abs" style="left:340px;top:585px;width:100px;height:220px;background:#2c2c2e;border-radius:10px"></div><div class="abs" style="left:360px;top:630px;width:30px;height:30px;border-radius:50%;background:#8a7ae8"></div><div class="abs" style="left:350px;top:690px;width:80px;height:25px;background:#444;border-radius:4px"></div><div class="abs" style="left:350px;top:725px;width:80px;height:25px;background:#444;border-radius:4px"></div><div class="abs" style="left:905px;top:455px;width:20px;height:10px;background:#bbb"></div><div class="abs" style="left:905px;top:480px;width:12px;height:14px;background:#555"></div><div class="abs" style="left:1213px;top:751px;width:24px;height:24px;border-radius:50%;background:#3a7a30"></div><div class="abs" style="left:1260px;top:103px;width:20px;height:697px;background:#efefef"></div><div class="abs" style="left:1264px;top:145px;width:11px;height:210px;background:#b4b4b4;border-radius:5px"></div></div></div>
    <div class="thumb" id="t3" style="left:539px;top:79px;width:133px;height:212px;background:#fff"><div class="abs" style="left:0;top:0;width:800px;height:1276px;transform:scale(.16625);transform-origin:0 0;background:#1d5f0b"><div class="abs" style="left:0px;top:0px;width:800px;height:24px;background:#8a14e8"></div><div class="abs" style="left:60px;top:2px;font-size:13px;line-height:18px;color:#fff;white-space:nowrap"><b>Microsoft Edge</b>&nbsp;&nbsp;&nbsp;File&nbsp;&nbsp;&nbsp;Edit&nbsp;&nbsp;&nbsp;View&nbsp;&nbsp;&nbsp;History&nbsp;&nbsp;&nbsp;Favorites&nbsp;&nbsp;&nbsp;Tools&nbsp;&nbsp;&nbsp;Profiles&nbsp;&nbsp;&nbsp;Tab&nbsp;&nbsp;&nbsp;Window&nbsp;&nbsp;&nbsp;Help</div><div class="abs" style="left:0px;top:24px;width:800px;height:44px;background:#d9d9d9"></div><div class="abs" style="left:16px;top:42px;width:13px;height:13px;border-radius:50%;background:#ec5a50"></div><div class="abs" style="left:37px;top:42px;width:13px;height:13px;border-radius:50%;background:#e8c028"></div><div class="abs" style="left:58px;top:42px;width:13px;height:13px;border-radius:50%;background:#40c840"></div><div class="abs" style="left:98px;top:34px;width:26px;height:26px;border-radius:50%;background:#333"></div><div class="abs" style="left:140px;top:39px;width:14px;height:14px;border-radius:3px;background:#c0a0e0;opacity:.8"></div><div class="abs" style="left:160px;top:44px;width:24px;height:5px;background:#999"></div><div class="abs" style="left:200px;top:39px;width:14px;height:14px;border-radius:3px;background:#e08040;opacity:.8"></div><div class="abs" style="left:220px;top:44px;width:24px;height:5px;background:#999"></div><div class="abs" style="left:260px;top:39px;width:14px;height:14px;border-radius:3px;background:#40a0e0;opacity:.8"></div><div class="abs" style="left:280px;top:44px;width:24px;height:5px;background:#999"></div><div class="abs" style="left:320px;top:39px;width:14px;height:14px;border-radius:3px;background:#8a40e0;opacity:.8"></div><div class="abs" style="left:340px;top:44px;width:24px;height:5px;background:#999"></div><div class="abs" style="left:380px;top:39px;width:14px;height:14px;border-radius:3px;background:#40c040;opacity:.8"></div><div class="abs" style="left:400px;top:44px;width:24px;height:5px;background:#999"></div><div class="abs" style="left:440px;top:39px;width:14px;height:14px;border-radius:3px;background:#8080f0;opacity:.8"></div><div class="abs" style="left:460px;top:44px;width:24px;height:5px;background:#999"></div><div class="abs" style="left:500px;top:39px;width:14px;height:14px;border-radius:3px;background:#c0a0e0;opacity:.8"></div><div class="abs" style="left:520px;top:44px;width:24px;height:5px;background:#999"></div><div class="abs" style="left:560px;top:39px;width:14px;height:14px;border-radius:3px;background:#e08040;opacity:.8"></div><div class="abs" style="left:580px;top:44px;width:24px;height:5px;background:#999"></div><div class="abs" style="left:620px;top:39px;width:14px;height:14px;border-radius:3px;background:#40a0e0;opacity:.8"></div><div class="abs" style="left:640px;top:44px;width:24px;height:5px;background:#999"></div><div class="abs" style="left:680px;top:39px;width:14px;height:14px;border-radius:3px;background:#8a40e0;opacity:.8"></div><div class="abs" style="left:700px;top:44px;width:24px;height:5px;background:#999"></div><div class="abs" style="left:0px;top:68px;width:800px;height:34px;background:#fff;border-bottom:1px solid #ccc"></div><div class="abs" style="left:145px;top:78px;font-size:14px;color:#888;white-space:nowrap"><span style="color:#333">www.ntwind.com</span>/cross-platform/screenshot-remote.html</div><div class="abs" style="left:380px;top:78px;width:18px;height:18px;border:2px solid #aaa;border-radius:4px"></div><div class="abs" style="left:430px;top:78px;width:18px;height:18px;border:2px solid #aaa;border-radius:4px"></div><div class="abs" style="left:480px;top:78px;width:18px;height:18px;border:2px solid #aaa;border-radius:4px"></div><div class="abs" style="left:530px;top:78px;width:18px;height:18px;border:2px solid #aaa;border-radius:4px"></div><div class="abs" style="left:580px;top:78px;width:18px;height:18px;border:2px solid #aaa;border-radius:4px"></div><div class="abs" style="left:630px;top:78px;width:18px;height:18px;border:2px solid #aaa;border-radius:4px"></div><div class="abs" style="left:680px;top:78px;width:18px;height:18px;border:2px solid #aaa;border-radius:4px"></div><div class="abs" style="left:730px;top:78px;width:18px;height:18px;border:2px solid #aaa;border-radius:4px"></div><div class="abs" style="left:760px;top:76px;width:22px;height:22px;border-radius:50%;background:linear-gradient(135deg,#30c0f0,#2050d0)"></div><div class="abs" style="left:147px;top:34px;width:228px;height:34px;background:#fff;border-radius:8px 8px 0 0"></div><div class="abs" style="left:0px;top:102px;width:780px;height:53px;background:#357a25"></div><div class="abs" style="left:24px;top:110px;width:32px;height:32px;border-radius:50%;background:#cfe0b0"></div><div class="abs" style="left:56px;top:104px;font-size:37px;line-height:40px;font-weight:bold;color:#e6f6ac;white-space:nowrap">ntwind software</div><div class="abs" style="left:586px;top:112px;width:87px;height:22px;background:#1a6a10"></div><div class="abs" style="left:689px;top:112px;width:68px;height:22px;background:#1a6a10"></div><div class="abs" style="left:598px;top:121px;width:62px;height:4px;background:#cfe8c0"></div><div class="abs" style="left:699px;top:121px;width:48px;height:4px;background:#cfe8c0"></div><div class="abs" style="left:20px;top:158px;width:749px;height:37px;background:linear-gradient(#fafafa,#d6d6d6);border-radius:8px"></div><div class="abs" style="left:55px;top:167px;font-size:14px;color:#999;white-space:nowrap">Products &#9660;</div><div class="abs" style="left:182px;top:167px;font-size:14px;color:#999;white-space:nowrap">Freeware &#9660;</div><div class="abs" style="left:309px;top:167px;font-size:14px;color:#999;white-space:nowrap">Download All</div><div class="abs" style="left:436px;top:167px;font-size:14px;color:#999;white-space:nowrap">Purchase All</div><div class="abs" style="left:563px;top:167px;font-size:14px;color:#999;white-space:nowrap">Tutorials</div><div class="abs" style="left:690px;top:167px;font-size:14px;color:#999;white-space:nowrap">News</div><div class="abs" style="left:20px;top:209px;width:749px;height:1100px;background:#fff;border-radius:8px"></div><div class="abs" style="left:62px;top:252px;font-size:38px;line-height:44px;color:#333;white-space:nowrap">Hello, and Welcome!</div><div class="abs" style="left:62px;top:326px;width:667px;font-size:14.5px;line-height:27px;color:#444;-webkit-text-stroke:.6px #444;white-space:nowrap;text-align:justify;text-align-last:justify;">Our mission is to provide PC users with quality and easy-to-use tools to accomplish</div><div class="abs" style="left:62px;top:353px;width:667px;font-size:14.5px;line-height:27px;color:#444;-webkit-text-stroke:.6px #444;white-space:nowrap;text-align:justify;text-align-last:justify;">complex tasks and enhance their everyday computer experience. On this website, you'll</div><div class="abs" style="left:62px;top:380px;width:667px;font-size:14.5px;line-height:27px;color:#444;-webkit-text-stroke:.6px #444;white-space:nowrap;">find the following products:</div><div class="abs" style="left:62px;top:430px;width:667px;height:2px;background:#e4e4e4"></div><div class="abs" style="left:62px;top:462px;font-size:28px;line-height:48px;color:#333;white-space:nowrap">Alt-Tab Terminator - Modern Task Switcher with<br>Search</div><div class="abs" style="left:62px;top:567px;width:667px;font-size:14.5px;line-height:27px;color:#444;-webkit-text-stroke:.6px #444;white-space:nowrap;text-align:justify;text-align-last:justify;">Alt-Tab Terminator replaces the default task switcher with a nice box that shows a list of</div><div class="abs" style="left:62px;top:594px;width:667px;font-size:14.5px;line-height:27px;color:#444;-webkit-text-stroke:.6px #444;white-space:nowrap;text-align:justify;text-align-last:justify;">all running tasks, live preview and app cloud. It allows you to search through the task list</div><div class="abs" style="left:62px;top:621px;width:667px;font-size:14.5px;line-height:27px;color:#444;-webkit-text-stroke:.6px #444;white-space:nowrap;text-align:justify;text-align-last:justify;">as you type and quickly navigate using the mouse and keyboard shortcuts. It's available</div><div class="abs" style="left:62px;top:648px;width:667px;font-size:14.5px;line-height:27px;color:#444;-webkit-text-stroke:.6px #444;white-space:nowrap;">in FREE and paid PRO versions.</div><div class="abs" style="left:110px;top:698px;width:190px;text-align:center;font-size:19px;line-height:28px;font-weight:bold;color:#d4b000">Search by title<br>or app name</div><div class="abs" style="left:320px;top:711px;width:330px;text-align:center;font-size:19px;line-height:28px;font-weight:bold;color:#d4b000">Live preview of selected app</div><div class="abs" style="left:96px;top:769px;width:597px;height:335px;background:linear-gradient(90deg,#a8a8dc,#c8c8ec 50%,#a8a8dc)"></div><div class="abs" style="left:120px;top:777px;width:550px;height:305px;background:#ececf6"></div><div class="abs" style="left:120px;top:777px;width:170px;height:305px;background:#f6f6fa"></div><div class="abs" style="left:143px;top:800px;width:14px;height:12px;background:#c0a030"></div><div class="abs" style="left:165px;top:804px;width:100px;height:5px;background:#aaa"></div><div class="abs" style="left:143px;top:820px;width:14px;height:12px;background:#6a20d8"></div><div class="abs" style="left:165px;top:824px;width:100px;height:5px;background:#aaa"></div><div class="abs" style="left:143px;top:840px;width:14px;height:12px;background:#2030a0"></div><div class="abs" style="left:165px;top:844px;width:100px;height:5px;background:#aaa"></div><div class="abs" style="left:143px;top:860px;width:14px;height:12px;background:#c0c0d0"></div><div class="abs" style="left:165px;top:864px;width:100px;height:5px;background:#aaa"></div><div class="abs" style="left:143px;top:880px;width:14px;height:12px;background:#c0c0d0"></div><div class="abs" style="left:165px;top:884px;width:100px;height:5px;background:#aaa"></div><div class="abs" style="left:143px;top:900px;width:14px;height:12px;background:#8a10d0"></div><div class="abs" style="left:165px;top:904px;width:100px;height:5px;background:#aaa"></div><div class="abs" style="left:143px;top:920px;width:14px;height:12px;background:#8a10d0"></div><div class="abs" style="left:165px;top:924px;width:100px;height:5px;background:#aaa"></div><div class="abs" style="left:143px;top:940px;width:14px;height:12px;background:#8a10d0"></div><div class="abs" style="left:165px;top:944px;width:100px;height:5px;background:#aaa"></div><div class="abs" style="left:143px;top:960px;width:14px;height:12px;background:#8a10d0"></div><div class="abs" style="left:165px;top:964px;width:100px;height:5px;background:#aaa"></div><div class="abs" style="left:143px;top:980px;width:14px;height:12px;background:#d0e040"></div><div class="abs" style="left:165px;top:984px;width:100px;height:5px;background:#aaa"></div><div class="abs" style="left:143px;top:1000px;width:14px;height:12px;background:#d0e040"></div><div class="abs" style="left:165px;top:1004px;width:100px;height:5px;background:#aaa"></div><div class="abs" style="left:143px;top:1020px;width:14px;height:12px;background:#4060c0"></div><div class="abs" style="left:165px;top:1024px;width:100px;height:5px;background:#aaa"></div><div class="abs" style="left:143px;top:1040px;width:14px;height:12px;background:#c0c0d0"></div><div class="abs" style="left:165px;top:1044px;width:100px;height:5px;background:#aaa"></div><div class="abs" style="left:143px;top:814px;width:140px;height:17px;background:#6a10e0"></div><div class="abs" style="left:303px;top:793px;width:343px;height:183px;background:linear-gradient(135deg,#9a98d0,#d0d0f0)"></div><div class="abs" style="left:380px;top:890px;width:230px;height:70px;border-radius:50%;background:#6a20d8"></div><div class="abs" style="left:363px;top:814px;width:207px;height:134px;background:#fbfbfd"></div><div class="abs" style="left:380px;top:840px;width:170px;height:4px;background:#ccc"></div><div class="abs" style="left:380px;top:855px;width:170px;height:4px;background:#ccc"></div><div class="abs" style="left:380px;top:870px;width:170px;height:4px;background:#ccc"></div><div class="abs" style="left:380px;top:885px;width:170px;height:4px;background:#ccc"></div><div class="abs" style="left:380px;top:900px;width:170px;height:4px;background:#ccc"></div><div class="abs" style="left:380px;top:915px;width:170px;height:4px;background:#ccc"></div><div class="abs" style="left:345px;top:1000px;width:270px;height:10px;background:#b0e070"></div><div class="abs" style="left:330px;top:1020px;width:300px;height:10px;background:#b0c0e0"></div><div class="abs" style="left:330px;top:1040px;width:220px;height:14px;background:#b070e0"></div><div class="abs" style="left:96px;top:1084px;width:597px;height:20px;background:#d8d8f0"></div><div class="abs" style="left:204px;top:1060px;width:3px;height:50px;background:#d4b000"></div><div class="abs" style="left:478px;top:1060px;width:3px;height:50px;background:#d4b000"></div><div class="abs" style="left:478px;top:755px;width:3px;height:50px;background:#d4b000"></div><div class="abs" style="left:105px;top:1113px;width:200px;text-align:center;font-size:19px;line-height:30px;font-weight:bold;color:#d4b000">Task list with<br>icons &amp; labels</div><div class="abs" style="left:340px;top:1113px;width:280px;text-align:center;font-size:19px;line-height:30px;font-weight:bold;color:#d4b000">App Cloud to filter by<br>application group</div><div class="abs" style="left:62px;top:1200px;font-size:15.5px;color:#6020d0;text-decoration:underline;white-space:nowrap">Learn more about <b>Alt-Tab Terminator</b> &gt;</div><div class="abs" style="left:62px;top:1247px;width:667px;height:2px;background:#e4e4e4"></div><div class="abs" style="left:780px;top:102px;width:20px;height:1174px;background:#fff"></div><div class="abs" style="left:784px;top:110px;width:11px;height:190px;background:#b4b4b4;border-radius:5px"></div></div></div>
    <div class="thumb" id="t4" style="left:27px;top:360px;width:212px;height:123px;background:#f4f4f4;border-radius:3px"><div class="abs" style="left:0;top:0;width:1280px;height:743px;transform:scale(.165625);transform-origin:0 0;background:#fff;font-size:15px;color:#2a2a2a"><div class="abs" style="left:0;top:0;width:246px;height:743px;background:#e5e3e5"></div><div class="abs" style="left:32px;top:33px;width:19px;height:19px;border-radius:50%;background:#e5483e"></div><div class="abs" style="left:64px;top:33px;width:19px;height:19px;border-radius:50%;background:#e0c720"></div><div class="abs" style="left:96px;top:33px;width:19px;height:19px;border-radius:50%;background:#3fc63a"></div><div class="abs" style="left:25px;top:90px;font-size:16px;color:#a8a6a8">Favorites</div><div class="abs" style="left:30px;top:126px;width:22px;height:22px;border:3px solid #7272ee;border-radius:6px"></div><div class="abs" style="left:65px;top:126px;line-height:22px;font-size:19px;color:#4a4a4a">Recents</div><div class="abs" style="left:30px;top:171px;width:22px;height:22px;border:3px solid #7272ee;border-radius:6px"></div><div class="abs" style="left:65px;top:171px;line-height:22px;font-size:19px;color:#4a4a4a">Applications</div><div class="abs" style="left:30px;top:216px;width:22px;height:22px;border:3px solid #7272ee;border-radius:6px"></div><div class="abs" style="left:65px;top:216px;line-height:22px;font-size:19px;color:#4a4a4a">Desktop</div><div class="abs" style="left:30px;top:261px;width:22px;height:22px;border:3px solid #7272ee;border-radius:6px"></div><div class="abs" style="left:65px;top:261px;line-height:22px;font-size:19px;color:#4a4a4a">Documents</div><div class="abs" style="left:19px;top:296px;width:210px;height:42px;border-radius:8px;background:#d1cfd3"></div><div class="abs" style="left:30px;top:306px;width:22px;height:22px;border:3px solid #7272ee;border-radius:6px"></div><div class="abs" style="left:65px;top:306px;line-height:22px;font-size:19px;color:#4a4a4a">Downloads</div><div class="abs" style="left:30px;top:351px;width:22px;height:22px;border:3px solid #7272ee;border-radius:6px"></div><div class="abs" style="left:65px;top:351px;line-height:22px;font-size:19px;color:#4a4a4a">Developer</div><div class="abs" style="left:30px;top:396px;width:22px;height:22px;border:3px solid #7272ee;border-radius:6px"></div><div class="abs" style="left:65px;top:396px;line-height:22px;font-size:19px;color:#4a4a4a">Projects</div><div class="abs" style="left:25px;top:408px;font-size:16px;color:#a8a6a8">Locations</div><div class="abs" style="left:30px;top:449px;width:22px;height:22px;border:3px solid #8a8a8a;border-radius:50%"></div><div class="abs" style="left:65px;top:449px;line-height:22px;font-size:19px;color:#4a4a4a">Backups</div><div class="abs" style="left:30px;top:494px;width:22px;height:22px;border:3px solid #8a8a8a;border-radius:50%"></div><div class="abs" style="left:65px;top:494px;line-height:22px;font-size:19px;color:#4a4a4a">Network</div><div class="abs" style="left:246px;top:0;width:1034px;height:132px;background:#f5f4f6"></div><div class="abs" style="left:280px;top:18px;font-size:44px;color:#8a8a8a;line-height:44px">&lsaquo;&nbsp;&nbsp;&rsaquo;</div><div class="abs" style="left:388px;top:29px;font-size:22px;font-weight:bold;color:#3a3a3a">Downloads</div><div class="abs" style="left:770px;top:30px;width:26px;height:24px;border:3px solid #8a8a8a;border-radius:5px"></div><div class="abs" style="left:900px;top:30px;width:26px;height:24px;border:3px solid #8a8a8a;border-radius:5px"></div><div class="abs" style="left:970px;top:30px;width:26px;height:24px;border:3px solid #8a8a8a;border-radius:5px"></div><div class="abs" style="left:1030px;top:30px;width:26px;height:24px;border:3px solid #8a8a8a;border-radius:5px"></div><div class="abs" style="left:1090px;top:30px;width:26px;height:24px;border:3px solid #8a8a8a;border-radius:5px"></div><div class="abs" style="left:1220px;top:30px;width:26px;height:24px;border:3px solid #8a8a8a;border-radius:5px"></div><div class="abs" style="left:246px;top:82px;width:1000px;height:50px;background:#efeef0;border-top:1px solid #e2e2e2"></div><div class="abs" style="left:660px;top:96px;font-size:16px;color:#6a6a6a">Downloads</div><div class="abs" style="left:1246px;top:82px;width:34px;height:50px;background:#e2e1e3;font-size:22px;color:#777;text-align:center;line-height:48px">+</div><div class="abs" style="left:325px;top:138px;font-size:17px;color:#9a9a9a">Name</div><div class="abs" style="left:611px;top:138px;font-size:17px;color:#9a9a9a">Size</div><div class="abs" style="left:763px;top:138px;font-size:17px;color:#9a9a9a">Kind</div><div class="abs" style="left:950px;top:138px;font-size:17px;color:#3a3a3a;font-weight:bold">Date Added</div><div class="abs" style="left:265px;top:182px;width:978px;height:31px;border-radius:8px;background:#6e10e6"></div><div class="abs" style="left:295px;top:188px;width:14px;height:18px;background:#bfe0a0;border:1px solid #bbb"></div><div class="abs" style="left:325px;top:186px;line-height:22px;color:#fff;font-size:18px">screenshot_...ode_light.png</div><div class="abs" style="left:646px;width:100px;text-align:right;top:186px;line-height:22px;color:#e8dcff;font-size:18px">511 KB</div><div class="abs" style="left:770px;top:186px;line-height:22px;color:#e8dcff;font-size:18px">PNG image</div><div class="abs" style="left:953px;top:186px;line-height:22px;color:#e8dcff;font-size:18px">Today at 16:16</div><div class="abs" style="left:265px;top:214px;width:978px;height:32px;background:#f2f2f2"></div><div class="abs" style="left:295px;top:220px;width:14px;height:18px;background:#ddd;border:1px solid #bbb"></div><div class="abs" style="left:325px;top:218px;line-height:22px;color:#2a2a2a;font-size:18px">previewed (6).zip</div><div class="abs" style="left:646px;width:100px;text-align:right;top:218px;line-height:22px;color:#8a8a8a;font-size:18px">511 KB</div><div class="abs" style="left:770px;top:218px;line-height:22px;color:#8a8a8a;font-size:18px">ZIP archive</div><div class="abs" style="left:953px;top:218px;line-height:22px;color:#8a8a8a;font-size:18px">Today at 16:16</div><div class="abs" style="left:295px;top:252px;width:14px;height:18px;background:#ddd;border:1px solid #bbb"></div><div class="abs" style="left:325px;top:250px;line-height:22px;color:#2a2a2a;font-size:18px">Screenshot_...2330043.png</div><div class="abs" style="left:646px;width:100px;text-align:right;top:250px;line-height:22px;color:#8a8a8a;font-size:18px">113 KB</div><div class="abs" style="left:770px;top:250px;line-height:22px;color:#8a8a8a;font-size:18px">PNG image</div><div class="abs" style="left:953px;top:250px;line-height:22px;color:#8a8a8a;font-size:18px">Today at 16:14</div><div class="abs" style="left:265px;top:278px;width:978px;height:32px;background:#f2f2f2"></div><div class="abs" style="left:295px;top:284px;width:14px;height:18px;background:#ddd;border:1px solid #bbb"></div><div class="abs" style="left:325px;top:282px;line-height:22px;color:#2a2a2a;font-size:18px">screenshot_...te_main.png</div><div class="abs" style="left:646px;width:100px;text-align:right;top:282px;line-height:22px;color:#8a8a8a;font-size:18px">524 KB</div><div class="abs" style="left:770px;top:282px;line-height:22px;color:#8a8a8a;font-size:18px">PNG image</div><div class="abs" style="left:953px;top:282px;line-height:22px;color:#8a8a8a;font-size:18px">Today at 16:06</div><div class="abs" style="left:295px;top:316px;width:14px;height:18px;background:#ddd;border:1px solid #bbb"></div><div class="abs" style="left:325px;top:314px;line-height:22px;color:#2a2a2a;font-size:18px">previewed (5).zip</div><div class="abs" style="left:646px;width:100px;text-align:right;top:314px;line-height:22px;color:#8a8a8a;font-size:18px">524 KB</div><div class="abs" style="left:770px;top:314px;line-height:22px;color:#8a8a8a;font-size:18px">ZIP archive</div><div class="abs" style="left:953px;top:314px;line-height:22px;color:#8a8a8a;font-size:18px">Today at 16:06</div><div class="abs" style="left:265px;top:342px;width:978px;height:32px;background:#f2f2f2"></div><div class="abs" style="left:295px;top:348px;width:14px;height:18px;background:#ddd;border:1px solid #bbb"></div><div class="abs" style="left:325px;top:346px;line-height:22px;color:#2a2a2a;font-size:18px">previewed (4).zip</div><div class="abs" style="left:646px;width:100px;text-align:right;top:346px;line-height:22px;color:#8a8a8a;font-size:18px">496 KB</div><div class="abs" style="left:770px;top:346px;line-height:22px;color:#8a8a8a;font-size:18px">ZIP archive</div><div class="abs" style="left:953px;top:346px;line-height:22px;color:#8a8a8a;font-size:18px">Today at 15:53</div><div class="abs" style="left:295px;top:381px;width:14px;height:18px;background:#ddd;border:1px solid #bbb"></div><div class="abs" style="left:325px;top:379px;line-height:22px;color:#2a2a2a;font-size:18px">screenshot_...ote_dark.png</div><div class="abs" style="left:646px;width:100px;text-align:right;top:379px;line-height:22px;color:#8a8a8a;font-size:18px">599 KB</div><div class="abs" style="left:770px;top:379px;line-height:22px;color:#8a8a8a;font-size:18px">PNG image</div><div class="abs" style="left:953px;top:379px;line-height:22px;color:#8a8a8a;font-size:18px">Today at 15:32</div><div class="abs" style="left:265px;top:407px;width:978px;height:32px;background:#f2f2f2"></div><div class="abs" style="left:295px;top:413px;width:14px;height:18px;background:#ddd;border:1px solid #bbb"></div><div class="abs" style="left:325px;top:411px;line-height:22px;color:#2a2a2a;font-size:18px">previewed (3).zip</div><div class="abs" style="left:646px;width:100px;text-align:right;top:411px;line-height:22px;color:#8a8a8a;font-size:18px">599 KB</div><div class="abs" style="left:770px;top:411px;line-height:22px;color:#8a8a8a;font-size:18px">ZIP archive</div><div class="abs" style="left:953px;top:411px;line-height:22px;color:#8a8a8a;font-size:18px">Today at 15:32</div><div class="abs" style="left:295px;top:445px;width:14px;height:18px;background:#ddd;border:1px solid #bbb"></div><div class="abs" style="left:325px;top:443px;line-height:22px;color:#2a2a2a;font-size:18px">previewed (2).zip</div><div class="abs" style="left:646px;width:100px;text-align:right;top:443px;line-height:22px;color:#8a8a8a;font-size:18px">600 KB</div><div class="abs" style="left:770px;top:443px;line-height:22px;color:#8a8a8a;font-size:18px">ZIP archive</div><div class="abs" style="left:953px;top:443px;line-height:22px;color:#8a8a8a;font-size:18px">Today at 15:24</div><div class="abs" style="left:265px;top:471px;width:978px;height:32px;background:#f2f2f2"></div><div class="abs" style="left:295px;top:477px;width:14px;height:18px;background:#ddd;border:1px solid #bbb"></div><div class="abs" style="left:325px;top:475px;line-height:22px;color:#2a2a2a;font-size:18px">image1 2.png</div><div class="abs" style="left:646px;width:100px;text-align:right;top:475px;line-height:22px;color:#8a8a8a;font-size:18px">608 KB</div><div class="abs" style="left:770px;top:475px;line-height:22px;color:#8a8a8a;font-size:18px">PNG image</div><div class="abs" style="left:953px;top:475px;line-height:22px;color:#8a8a8a;font-size:18px">Today at 15:22</div><div class="abs" style="left:295px;top:509px;width:14px;height:18px;background:#ddd;border:1px solid #bbb"></div><div class="abs" style="left:325px;top:507px;line-height:22px;color:#2a2a2a;font-size:18px">previewed (1).zip</div><div class="abs" style="left:646px;width:100px;text-align:right;top:507px;line-height:22px;color:#8a8a8a;font-size:18px">608 KB</div><div class="abs" style="left:770px;top:507px;line-height:22px;color:#8a8a8a;font-size:18px">ZIP archive</div><div class="abs" style="left:953px;top:507px;line-height:22px;color:#8a8a8a;font-size:18px">Today at 15:33</div><div class="abs" style="left:265px;top:535px;width:978px;height:32px;background:#f2f2f2"></div><div class="abs" style="left:295px;top:541px;width:14px;height:18px;background:#ddd;border:1px solid #bbb"></div><div class="abs" style="left:325px;top:539px;line-height:22px;color:#2a2a2a;font-size:18px">screenshot_...ote_time.png</div><div class="abs" style="left:646px;width:100px;text-align:right;top:539px;line-height:22px;color:#8a8a8a;font-size:18px">451 KB</div><div class="abs" style="left:770px;top:539px;line-height:22px;color:#8a8a8a;font-size:18px">PNG image</div><div class="abs" style="left:953px;top:539px;line-height:22px;color:#8a8a8a;font-size:18px">Today at 15:15</div><div class="abs" style="left:295px;top:573px;width:14px;height:18px;background:#ddd;border:1px solid #bbb"></div><div class="abs" style="left:325px;top:571px;line-height:22px;color:#2a2a2a;font-size:18px">image1.png</div><div class="abs" style="left:646px;width:100px;text-align:right;top:571px;line-height:22px;color:#8a8a8a;font-size:18px">403 KB</div><div class="abs" style="left:770px;top:571px;line-height:22px;color:#8a8a8a;font-size:18px">PNG image</div><div class="abs" style="left:953px;top:571px;line-height:22px;color:#8a8a8a;font-size:18px">Today at 14:58</div><div class="abs" style="left:265px;top:599px;width:978px;height:32px;background:#f2f2f2"></div><div class="abs" style="left:295px;top:605px;width:14px;height:18px;background:#ddd;border:1px solid #bbb"></div><div class="abs" style="left:325px;top:603px;line-height:22px;color:#2a2a2a;font-size:18px">previewed.zip</div><div class="abs" style="left:646px;width:100px;text-align:right;top:603px;line-height:22px;color:#8a8a8a;font-size:18px">403 KB</div><div class="abs" style="left:770px;top:603px;line-height:22px;color:#8a8a8a;font-size:18px">ZIP archive</div><div class="abs" style="left:953px;top:603px;line-height:22px;color:#8a8a8a;font-size:18px">Today at 14:58</div><div class="abs" style="left:295px;top:637px;width:14px;height:18px;background:#ddd;border:1px solid #bbb"></div><div class="abs" style="left:325px;top:635px;line-height:22px;color:#2a2a2a;font-size:18px">Screenshot_...232126.png</div><div class="abs" style="left:646px;width:100px;text-align:right;top:635px;line-height:22px;color:#8a8a8a;font-size:18px">105 KB</div><div class="abs" style="left:770px;top:635px;line-height:22px;color:#8a8a8a;font-size:18px">PNG image</div><div class="abs" style="left:953px;top:635px;line-height:22px;color:#8a8a8a;font-size:18px">Today at 14:55</div><div class="abs" style="left:265px;top:664px;width:978px;height:32px;background:#f2f2f2"></div><div class="abs" style="left:295px;top:670px;width:14px;height:18px;background:#ddd;border:1px solid #bbb"></div><div class="abs" style="left:325px;top:668px;line-height:22px;color:#2a2a2a;font-size:18px">previewed-template</div><div class="abs" style="left:646px;width:100px;text-align:right;top:668px;line-height:22px;color:#8a8a8a;font-size:18px">--</div><div class="abs" style="left:770px;top:668px;line-height:22px;color:#8a8a8a;font-size:18px">Folder</div><div class="abs" style="left:953px;top:668px;line-height:22px;color:#8a8a8a;font-size:18px">20 May 2024 at 21:33</div><div class="abs" style="left:1262px;top:186px;width:8px;height:125px;border-radius:4px;background:#c4c4c4"></div><div class="abs" style="left:246px;top:697px;width:1034px;height:46px;background:#f5f4f6;border-top:1px solid #ddd"></div><div class="abs" style="left:265px;top:708px;font-size:16px;color:#777">&#9632; MEMBOX &rsaquo; &#9632; Users &rsaquo; &#9632; as12 &rsaquo; &#9632; Downloads &rsaquo; &#9679; screenshot_remote_light.png</div></div></div>
    <div class="thumb" id="t5" style="left:293px;top:316px;width:153px;height:212px;background:#6f6e6c;border-radius:5px"><div class="abs" style="left:0;top:0;width:153px;height:53px;background:#474543"></div><div class="abs" style="left:5.0px;top:5px;width:8px;height:8px;border-radius:50%;background:#e2594e"></div><div class="abs" style="left:18.3px;top:5px;width:8px;height:8px;border-radius:50%;background:#dfc51e"></div><div class="abs" style="left:31.6px;top:5px;width:8px;height:8px;border-radius:50%;background:#4fc22d"></div><svg class="abs" style="left:124px;top:20px" width="22" height="28" viewBox="0 0 22 28"><ellipse cx="11" cy="13" rx="8" ry="11.6" fill="none" stroke="#f4f4f4" stroke-width="1.4"/></svg><div class="abs" style="left:0.0px;top:53px;width:37.5px;height:32px;background:#5c5b59;border-right:1px solid #43413f;border-bottom:1px solid #43413f;color:#f2f2f2;font-size:14.5px;line-height:32px;text-align:center">AC</div><div class="abs" style="left:37.5px;top:53px;width:38.2px;height:32px;background:#5c5b59;border-right:1px solid #43413f;border-bottom:1px solid #43413f;color:#f2f2f2;font-size:14.5px;line-height:32px;text-align:center">⁺∕₋</div><div class="abs" style="left:75.7px;top:53px;width:38.3px;height:32px;background:#5c5b59;border-right:1px solid #43413f;border-bottom:1px solid #43413f;color:#f2f2f2;font-size:14.5px;line-height:32px;text-align:center">%</div><div class="abs" style="left:114.0px;top:53px;width:39.0px;height:32px;background:#dbb900;border-bottom:1px solid #43413f;color:#f2f2f2;font-size:20px;line-height:32px;text-align:center">÷</div><div class="abs" style="left:0.0px;top:85px;width:37.5px;height:31px;background:#737270;border-right:1px solid #43413f;border-bottom:1px solid #43413f;color:#f2f2f2;font-size:14.5px;line-height:31px;text-align:center">7</div><div class="abs" style="left:37.5px;top:85px;width:38.2px;height:31px;background:#737270;border-right:1px solid #43413f;border-bottom:1px solid #43413f;color:#f2f2f2;font-size:14.5px;line-height:31px;text-align:center">8</div><div class="abs" style="left:75.7px;top:85px;width:38.3px;height:31px;background:#737270;border-right:1px solid #43413f;border-bottom:1px solid #43413f;color:#f2f2f2;font-size:14.5px;line-height:31px;text-align:center">9</div><div class="abs" style="left:114.0px;top:85px;width:39.0px;height:31px;background:#dbb900;border-bottom:1px solid #43413f;color:#f2f2f2;font-size:20px;line-height:31px;text-align:center">×</div><div class="abs" style="left:0.0px;top:116px;width:37.5px;height:32px;background:#737270;border-right:1px solid #43413f;border-bottom:1px solid #43413f;color:#f2f2f2;font-size:14.5px;line-height:32px;text-align:center">4</div><div class="abs" style="left:37.5px;top:116px;width:38.2px;height:32px;background:#737270;border-right:1px solid #43413f;border-bottom:1px solid #43413f;color:#f2f2f2;font-size:14.5px;line-height:32px;text-align:center">5</div><div class="abs" style="left:75.7px;top:116px;width:38.3px;height:32px;background:#737270;border-right:1px solid #43413f;border-bottom:1px solid #43413f;color:#f2f2f2;font-size:14.5px;line-height:32px;text-align:center">6</div><div class="abs" style="left:114.0px;top:116px;width:39.0px;height:32px;background:#dbb900;border-bottom:1px solid #43413f;color:#f2f2f2;font-size:20px;line-height:32px;text-align:center">−</div><div class="abs" style="left:0.0px;top:148px;width:37.5px;height:32px;background:#737270;border-right:1px solid #43413f;border-bottom:1px solid #43413f;color:#f2f2f2;font-size:14.5px;line-height:32px;text-align:center">1</div><div class="abs" style="left:37.5px;top:148px;width:38.2px;height:32px;background:#737270;border-right:1px solid #43413f;border-bottom:1px solid #43413f;color:#f2f2f2;font-size:14.5px;line-height:32px;text-align:center">2</div><div class="abs" style="left:75.7px;top:148px;width:38.3px;height:32px;background:#737270;border-right:1px solid #43413f;border-bottom:1px solid #43413f;color:#f2f2f2;font-size:14.5px;line-height:32px;text-align:center">3</div><div class="abs" style="left:114.0px;top:148px;width:39.0px;height:32px;background:#dbb900;border-bottom:1px solid #43413f;color:#f2f2f2;font-size:20px;line-height:32px;text-align:center">+</div><div class="abs" style="left:0.0px;top:180px;width:75.7px;height:32px;background:#737270;border-right:1px solid #43413f;color:#f2f2f2;font-size:14.5px;line-height:32px;text-align:center">0</div><div class="abs" style="left:75.7px;top:180px;width:38.3px;height:32px;background:#737270;border-right:1px solid #43413f;color:#f2f2f2;font-size:14.5px;line-height:32px;text-align:center">,</div><div class="abs" style="left:114.0px;top:180px;width:39.0px;height:32px;background:#dbb900;color:#f2f2f2;font-size:20px;line-height:32px;text-align:center">=</div></div>
    <div class="thumb" id="t6" style="left:500px;top:328px;width:212px;height:186px;background:#eeeeee;border-radius:3px"><div class="abs" style="left:0;top:0;width:1280px;height:1123px;transform:scale(.165625);transform-origin:0 0;background:#efeeef;font-size:18px;color:#3a3a3a"><div class="abs" style="left:0;top:0;width:385px;height:1123px;background:#e5e3e5"></div><div class="abs" style="left:34px;top:39px;width:20px;height:20px;border-radius:50%;background:#e5483e"></div><div class="abs" style="left:70px;top:39px;width:20px;height:20px;border-radius:50%;background:#e0c720"></div><div class="abs" style="left:106px;top:39px;width:20px;height:20px;border-radius:50%;background:#3fc63a"></div><div class="abs" style="left:9px;top:93px;width:360px;height:58px;border-radius:12px;border:4px solid #a674f2;background:#dddbdd"></div><div class="abs" style="left:30px;top:109px;width:20px;height:20px;border:3px solid #777;border-radius:50%"></div><div class="abs" style="left:62px;top:108px;width:3px;height:26px;background:#6a40e0"></div><div class="abs" style="left:70px;top:108px;font-size:18px;color:#b8b8b8">Search</div><div class="abs" style="left:0;top:165px;width:385px;height:1px;background:#d8d6d8"></div><div class="abs" style="left:25px;top:188px;width:35px;height:35px;border-radius:8px;background:#e8503c"></div><div class="abs" style="left:72px;top:193px;line-height:24px;font-size:21px;color:#4a4a4a">Notifications</div><div class="abs" style="left:25px;top:237px;width:35px;height:35px;border-radius:8px;background:#e63c5c"></div><div class="abs" style="left:72px;top:242px;line-height:24px;font-size:21px;color:#4a4a4a">Sound</div><div class="abs" style="left:25px;top:288px;width:35px;height:35px;border-radius:8px;background:#7a22e2"></div><div class="abs" style="left:72px;top:293px;line-height:24px;font-size:21px;color:#4a4a4a">Focus</div><div class="abs" style="left:25px;top:337px;width:35px;height:35px;border-radius:8px;background:#7a22e2"></div><div class="abs" style="left:72px;top:342px;line-height:24px;font-size:21px;color:#4a4a4a">Screen Time</div><div class="abs" style="left:25px;top:411px;width:35px;height:35px;border-radius:8px;background:#adadb1"></div><div class="abs" style="left:72px;top:416px;line-height:24px;font-size:21px;color:#4a4a4a">General</div><div class="abs" style="left:25px;top:461px;width:35px;height:35px;border-radius:8px;background:#1d1d1d"></div><div class="abs" style="left:72px;top:466px;line-height:24px;font-size:21px;color:#4a4a4a">Appearance</div><div class="abs" style="left:25px;top:511px;width:35px;height:35px;border-radius:8px;background:#6e32ea"></div><div class="abs" style="left:72px;top:516px;line-height:24px;font-size:21px;color:#4a4a4a">Accessibility</div><div class="abs" style="left:25px;top:562px;width:35px;height:35px;border-radius:8px;background:#adadb1"></div><div class="abs" style="left:72px;top:567px;line-height:24px;font-size:21px;color:#4a4a4a">Control Center</div><div class="abs" style="left:25px;top:613px;width:35px;height:35px;border-radius:8px;background:#3a2a6a"></div><div class="abs" style="left:72px;top:618px;line-height:24px;font-size:21px;color:#4a4a4a">Siri &amp; Spotlight</div><div class="abs" style="left:25px;top:663px;width:35px;height:35px;border-radius:8px;background:#7430ea"></div><div class="abs" style="left:72px;top:668px;line-height:24px;font-size:21px;color:#4a4a4a">Privacy &amp; Security</div><div class="abs" style="left:25px;top:736px;width:35px;height:35px;border-radius:8px;background:#1d1d1d"></div><div class="abs" style="left:72px;top:741px;line-height:24px;font-size:21px;color:#4a4a4a">Desktop &amp; Dock</div><div class="abs" style="left:25px;top:787px;width:35px;height:35px;border-radius:8px;background:#7422ea"></div><div class="abs" style="left:72px;top:792px;line-height:24px;font-size:21px;color:#4a4a4a">Displays</div><div class="abs" style="left:18px;top:830px;width:319px;height:46px;border-radius:8px;background:#d3d1d3"></div><div class="abs" style="left:25px;top:836px;width:35px;height:35px;border-radius:8px;background:#a6bff6"></div><div class="abs" style="left:72px;top:841px;line-height:24px;font-size:21px;color:#4a4a4a">Wallpaper</div><div class="abs" style="left:25px;top:887px;width:35px;height:35px;border-radius:8px;background:#a8c6f6"></div><div class="abs" style="left:72px;top:892px;line-height:24px;font-size:21px;color:#4a4a4a">Screen Saver</div><div class="abs" style="left:25px;top:936px;width:35px;height:35px;border-radius:8px;background:#e6bf00"></div><div class="abs" style="left:72px;top:941px;line-height:24px;font-size:21px;color:#4a4a4a">Energy Saver</div><div class="abs" style="left:25px;top:1010px;width:35px;height:35px;border-radius:8px;background:#1d1d1d"></div><div class="abs" style="left:72px;top:1015px;line-height:24px;font-size:21px;color:#4a4a4a">Lock Screen</div><div class="abs" style="left:25px;top:1061px;width:35px;height:35px;border-radius:8px;background:#a9a9ad"></div><div class="abs" style="left:72px;top:1066px;line-height:24px;font-size:21px;color:#4a4a4a">Login Password</div><div class="abs" style="left:25px;top:1105px;width:35px;height:35px;border-radius:8px;background:#7a22e2"></div><div class="abs" style="left:72px;top:1110px;line-height:24px;font-size:21px;color:#4a4a4a">Users &amp; Groups</div><div class="abs" style="left:364px;top:362px;width:8px;height:250px;border-radius:4px;background:#c4c2c4"></div><div class="abs" style="left:422px;top:22px;font-size:48px;color:#8a8a8a;line-height:48px">&lsaquo;&nbsp;&nbsp;&rsaquo;</div><div class="abs" style="left:544px;top:34px;font-size:25px;color:#3a3a3a;font-weight:bold">Wallpaper</div><div class="abs" style="left:425px;top:104px;width:248px;height:131px;border-radius:6px;background:linear-gradient(170deg,#4a0a90 0%,#7a18c0 35%,#5a3a90 50%,#70e040 68%,#2a8a20 85%,#206010 100%)"></div><div class="abs" style="left:696px;top:98px;width:546px;height:67px;border-radius:10px;background:#e6e5e6"></div><div class="abs" style="left:713px;top:120px;color:#555">Sonoma</div><div class="abs" style="left:1080px;top:120px;color:#555">Automatic &#8661;</div><div class="abs" style="left:696px;top:184px;width:546px;height:128px;border-radius:10px;background:#e6e5e6"></div><div class="abs" style="left:713px;top:207px;color:#555">Show as screen saver</div><div class="abs" style="left:713px;top:273px;color:#555">Show on all Spaces</div><div class="abs" style="left:1180px;top:206px;width:44px;height:24px;border-radius:12px;background:#dcdadc"></div><div class="abs" style="left:1181px;top:207px;width:22px;height:22px;border-radius:11px;background:#fff"></div><div class="abs" style="left:1180px;top:272px;width:44px;height:24px;border-radius:12px;background:#7410e8"></div><div class="abs" style="left:1201px;top:273px;width:22px;height:22px;border-radius:11px;background:#fff"></div><div class="abs" style="left:791px;top:344px;width:162px;height:32px;border-radius:7px;background:#fbfbfb;font-size:17px;line-height:32px;text-align:center;color:#555">Add Photo &#8964;</div><div class="abs" style="left:971px;top:344px;width:271px;height:32px;border-radius:7px;background:#fbfbfb;font-size:17px;line-height:32px;text-align:center;color:#555">Add Folder or Album &#8964;</div><div class="abs" style="left:385px;top:406px;width:895px;height:2px;background:#e2e1e2"></div><div class="abs" style="left:1261px;top:414px;width:10px;height:260px;border-radius:5px;background:#c8c6c8"></div><div class="abs" style="left:428px;top:456px;font-size:19px;font-weight:bold;color:#444">Dynamic Wallpapers</div><div class="abs" style="left:1093px;top:457px;font-size:16px;color:#aaa">Show All (35)</div><div class="abs" style="left:422px;top:500px;width:190px;height:123px;border-radius:6px;background:linear-gradient(135deg,#f08050 0%,#e05050 25%,#2a8a20 40%,#a0f010 60%,#7a20d0 62%,#5a10a0 100%)"></div><div class="abs" style="left:582px;top:600px;width:18px;height:14px;border-radius:3px;background:#eee;opacity:.8"></div><div class="abs" style="left:422px;top:635px;width:190px;text-align:center;font-size:15px;color:#555">Sonoma</div><div class="abs" style="left:633px;top:500px;width:190px;height:123px;border-radius:6px;background:linear-gradient(135deg,#f8d030 0%,#f0a010 40%,#e06010 60%,#f8c030 80%,#a04010 100%)"></div><div class="abs" style="left:793px;top:600px;width:18px;height:14px;border-radius:3px;background:#eee;opacity:.8"></div><div class="abs" style="left:633px;top:635px;width:190px;text-align:center;font-size:15px;color:#555">Ventura &#8595;</div><div class="abs" style="left:843px;top:500px;width:190px;height:123px;border-radius:6px;background:linear-gradient(120deg,#6010b0 0%,#9a20d8 40%,#e070e0 55%,#b030d0 70%,#5010a0 100%)"></div><div class="abs" style="left:1003px;top:600px;width:18px;height:14px;border-radius:3px;background:#eee;opacity:.8"></div><div class="abs" style="left:843px;top:635px;width:190px;text-align:center;font-size:15px;color:#555">Monterey &#8595;</div><div class="abs" style="left:1055px;top:500px;width:190px;height:123px;border-radius:6px;background:linear-gradient(170deg,#203060 0%,#405070 35%,#8a8a40 60%,#304030 100%)"></div><div class="abs" style="left:1215px;top:600px;width:18px;height:14px;border-radius:3px;background:#eee;opacity:.8"></div><div class="abs" style="left:1055px;top:635px;width:190px;text-align:center;font-size:15px;color:#555">Big Sur &#8595;</div><div class="abs" style="left:428px;top:716px;font-size:19px;font-weight:bold;color:#444">Landscape</div><div class="abs" style="left:1093px;top:717px;font-size:16px;color:#aaa">Show All (81)</div><div class="abs" style="left:422px;top:760px;width:190px;height:123px;border-radius:6px;background:linear-gradient(180deg,#5a30b0 0%,#70809a 18%,#4a6a20 35%,#2a4010 100%)"></div><div class="abs" style="left:582px;top:860px;width:18px;height:14px;border-radius:3px;background:#eee;opacity:.8"></div><div class="abs" style="left:422px;top:895px;width:190px;text-align:center;font-size:15px;color:#555">Sonoma Horizon</div><div class="abs" style="left:633px;top:760px;width:190px;height:123px;border-radius:6px;background:linear-gradient(180deg,#8a90d0 0%,#90a840 15%,#7a9a30 50%,#a0b050 100%)"></div><div class="abs" style="left:793px;top:860px;width:18px;height:14px;border-radius:3px;background:#eee;opacity:.8"></div><div class="abs" style="left:633px;top:895px;width:190px;text-align:center;font-size:15px;color:#555">California&#8217;s</div><div class="abs" style="left:843px;top:760px;width:190px;height:123px;border-radius:6px;background:linear-gradient(180deg,#1a2a1a 0%,#2a4020 50%,#1a2a18 100%)"></div><div class="abs" style="left:1003px;top:860px;width:18px;height:14px;border-radius:3px;background:#eee;opacity:.8"></div><div class="abs" style="left:843px;top:895px;width:190px;text-align:center;font-size:15px;color:#555">Redwoods</div><div class="abs" style="left:1055px;top:760px;width:190px;height:123px;border-radius:6px;background:linear-gradient(180deg,#8a88d8 0%,#b0a0c0 35%,#6a4030 55%,#8a5a30 100%)"></div><div class="abs" style="left:1215px;top:860px;width:18px;height:14px;border-radius:3px;background:#eee;opacity:.8"></div><div class="abs" style="left:1055px;top:895px;width:190px;text-align:center;font-size:15px;color:#555">Utah Evening &#8595;</div><div class="abs" style="left:428px;top:973px;font-size:19px;font-weight:bold;color:#444">Cityscape</div><div class="abs" style="left:1093px;top:974px;font-size:16px;color:#aaa">Show All (30)</div><div class="abs" style="left:422px;top:1017px;width:190px;height:123px;border-radius:6px;background:linear-gradient(180deg,#7a50c0 0%,#a080b0 40%,#6a5a70 100%)"></div><div class="abs" style="left:582px;top:1117px;width:18px;height:14px;border-radius:3px;background:#eee;opacity:.8"></div><div class="abs" style="left:633px;top:1017px;width:190px;height:123px;border-radius:6px;background:linear-gradient(135deg,#6a7a6a 0%,#a0a898 50%,#5a6a5a 100%)"></div><div class="abs" style="left:793px;top:1117px;width:18px;height:14px;border-radius:3px;background:#eee;opacity:.8"></div><div class="abs" style="left:843px;top:1017px;width:190px;height:123px;border-radius:6px;background:linear-gradient(180deg,#7a50b0 0%,#d0d060 40%,#6a7a30 100%)"></div><div class="abs" style="left:1003px;top:1117px;width:18px;height:14px;border-radius:3px;background:#eee;opacity:.8"></div><div class="abs" style="left:1055px;top:1017px;width:190px;height:123px;border-radius:6px;background:linear-gradient(135deg,#2a1a3a 0%,#a030c0 50%,#3a2040 100%)"></div><div class="abs" style="left:1215px;top:1117px;width:18px;height:14px;border-radius:3px;background:#eee;opacity:.8"></div></div></div>
    <div class="thumb" id="t7" style="left:27px;top:592px;width:212px;height:132px;background:#1a6a12"><div class="abs" style="left:0;top:0;width:1280px;height:800px;transform:scale(.165625);transform-origin:0 0;background:#1d5f0b"><div class="abs" style="left:0px;top:0px;width:1280px;height:24px;background:linear-gradient(90deg,#c83c8c 0%,#b040b8 50%,#9a40d0 100%)"></div><div class="abs" style="left:60px;top:2px;font-size:13px;line-height:18px;color:#fff;white-space:nowrap"><b>Microsoft Edge</b>&nbsp;&nbsp;&nbsp;File&nbsp;&nbsp;&nbsp;Edit&nbsp;&nbsp;&nbsp;View&nbsp;&nbsp;&nbsp;History&nbsp;&nbsp;&nbsp;Favorites&nbsp;&nbsp;&nbsp;Tools&nbsp;&nbsp;&nbsp;Profiles&nbsp;&nbsp;&nbsp;Tab&nbsp;&nbsp;&nbsp;Window&nbsp;&nbsp;&nbsp;Help</div><div class="abs" style="left:0px;top:24px;width:1280px;height:40px;background:#d9d9d9"></div><div class="abs" style="left:16px;top:42px;width:13px;height:13px;border-radius:50%;background:#ec5a50"></div><div class="abs" style="left:37px;top:42px;width:13px;height:13px;border-radius:50%;background:#e8c028"></div><div class="abs" style="left:58px;top:42px;width:13px;height:13px;border-radius:50%;background:#40c840"></div><div class="abs" style="left:98px;top:34px;width:26px;height:26px;border-radius:50%;background:#333"></div><div class="abs" style="left:140px;top:39px;width:14px;height:14px;border-radius:3px;background:#c0a0e0;opacity:.8"></div><div class="abs" style="left:160px;top:44px;width:24px;height:5px;background:#999"></div><div class="abs" style="left:200px;top:39px;width:14px;height:14px;border-radius:3px;background:#e08040;opacity:.8"></div><div class="abs" style="left:220px;top:44px;width:24px;height:5px;background:#999"></div><div class="abs" style="left:260px;top:39px;width:14px;height:14px;border-radius:3px;background:#40a0e0;opacity:.8"></div><div class="abs" style="left:280px;top:44px;width:24px;height:5px;background:#999"></div><div class="abs" style="left:320px;top:39px;width:14px;height:14px;border-radius:3px;background:#8a40e0;opacity:.8"></div><div class="abs" style="left:340px;top:44px;width:24px;height:5px;background:#999"></div><div class="abs" style="left:380px;top:39px;width:14px;height:14px;border-radius:3px;background:#40c040;opacity:.8"></div><div class="abs" style="left:400px;top:44px;width:24px;height:5px;background:#999"></div><div class="abs" style="left:440px;top:39px;width:14px;height:14px;border-radius:3px;background:#8080f0;opacity:.8"></div><div class="abs" style="left:460px;top:44px;width:24px;height:5px;background:#999"></div><div class="abs" style="left:500px;top:39px;width:14px;height:14px;border-radius:3px;background:#c0a0e0;opacity:.8"></div><div class="abs" style="left:520px;top:44px;width:24px;height:5px;background:#999"></div><div class="abs" style="left:560px;top:39px;width:14px;height:14px;border-radius:3px;background:#e08040;opacity:.8"></div><div class="abs" style="left:580px;top:44px;width:24px;height:5px;background:#999"></div><div class="abs" style="left:620px;top:39px;width:14px;height:14px;border-radius:3px;background:#40a0e0;opacity:.8"></div><div class="abs" style="left:640px;top:44px;width:24px;height:5px;background:#999"></div><div class="abs" style="left:680px;top:39px;width:14px;height:14px;border-radius:3px;background:#8a40e0;opacity:.8"></div><div class="abs" style="left:700px;top:44px;width:24px;height:5px;background:#999"></div><div class="abs" style="left:740px;top:39px;width:14px;height:14px;border-radius:3px;background:#40c040;opacity:.8"></div><div class="abs" style="left:760px;top:44px;width:24px;height:5px;background:#999"></div><div class="abs" style="left:800px;top:39px;width:14px;height:14px;border-radius:3px;background:#8080f0;opacity:.8"></div><div class="abs" style="left:820px;top:44px;width:24px;height:5px;background:#999"></div><div class="abs" style="left:860px;top:39px;width:14px;height:14px;border-radius:3px;background:#c0a0e0;opacity:.8"></div><div class="abs" style="left:880px;top:44px;width:24px;height:5px;background:#999"></div><div class="abs" style="left:920px;top:39px;width:14px;height:14px;border-radius:3px;background:#e08040;opacity:.8"></div><div class="abs" style="left:940px;top:44px;width:24px;height:5px;background:#999"></div><div class="abs" style="left:980px;top:39px;width:14px;height:14px;border-radius:3px;background:#40a0e0;opacity:.8"></div><div class="abs" style="left:1000px;top:44px;width:24px;height:5px;background:#999"></div><div class="abs" style="left:1040px;top:39px;width:14px;height:14px;border-radius:3px;background:#8a40e0;opacity:.8"></div><div class="abs" style="left:1060px;top:44px;width:24px;height:5px;background:#999"></div><div class="abs" style="left:1100px;top:39px;width:14px;height:14px;border-radius:3px;background:#40c040;opacity:.8"></div><div class="abs" style="left:1120px;top:44px;width:24px;height:5px;background:#999"></div><div class="abs" style="left:1160px;top:39px;width:14px;height:14px;border-radius:3px;background:#8080f0;opacity:.8"></div><div class="abs" style="left:1180px;top:44px;width:24px;height:5px;background:#999"></div><div class="abs" style="left:0px;top:64px;width:1280px;height:43px;background:#fff;border-bottom:1px solid #ccc"></div><div class="abs" style="left:145px;top:74px;font-size:14px;color:#888;white-space:nowrap"><span style="color:#333">www.ntwind.com</span>/cross-platform/screenshot-remote.html</div><div class="abs" style="left:860px;top:74px;width:18px;height:18px;border:2px solid #aaa;border-radius:4px"></div><div class="abs" style="left:910px;top:74px;width:18px;height:18px;border:2px solid #aaa;border-radius:4px"></div><div class="abs" style="left:960px;top:74px;width:18px;height:18px;border:2px solid #aaa;border-radius:4px"></div><div class="abs" style="left:1010px;top:74px;width:18px;height:18px;border:2px solid #aaa;border-radius:4px"></div><div class="abs" style="left:1060px;top:74px;width:18px;height:18px;border:2px solid #aaa;border-radius:4px"></div><div class="abs" style="left:1110px;top:74px;width:18px;height:18px;border:2px solid #aaa;border-radius:4px"></div><div class="abs" style="left:1160px;top:74px;width:18px;height:18px;border:2px solid #aaa;border-radius:4px"></div><div class="abs" style="left:1210px;top:74px;width:18px;height:18px;border:2px solid #aaa;border-radius:4px"></div><div class="abs" style="left:1240px;top:72px;width:22px;height:22px;border-radius:50%;background:linear-gradient(135deg,#30c0f0,#2050d0)"></div><div class="abs" style="left:0px;top:107px;width:1262px;height:43px;background:#2f6e1f"></div><div class="abs" style="left:163px;top:112px;width:28px;height:28px;border-radius:50%;background:#cfe0b0"></div><div class="abs" style="left:193px;top:107px;font-size:37px;line-height:40px;font-weight:bold;color:#e2f4a8;white-space:nowrap">ntwind software</div><div class="abs" style="left:921px;top:116px;width:92px;height:22px;background:#1a6a10;border:1px solid #4a8a3a"></div><div class="abs" style="left:1025px;top:116px;width:78px;height:22px;background:#1a6a10;border:1px solid #4a8a3a"></div><div class="abs" style="left:935px;top:125px;width:60px;height:4px;background:#cfe8c0"></div><div class="abs" style="left:1037px;top:125px;width:52px;height:4px;background:#cfe8c0"></div><div class="abs" style="left:163px;top:160px;width:942px;height:40px;background:linear-gradient(#fafafa,#d6d6d6);border-radius:8px"></div><div class="abs" style="left:213px;top:171px;font-size:14px;color:#999;white-space:nowrap">Products &#9660;</div><div class="abs" style="left:362px;top:171px;font-size:14px;color:#999;white-space:nowrap">Freeware &#9660;</div><div class="abs" style="left:511px;top:171px;font-size:14px;color:#999;white-space:nowrap">Download All</div><div class="abs" style="left:660px;top:171px;font-size:14px;color:#999;white-space:nowrap">Purchase All</div><div class="abs" style="left:809px;top:171px;font-size:14px;color:#999;white-space:nowrap">Tutorials</div><div class="abs" style="left:958px;top:171px;font-size:14px;color:#999;white-space:nowrap">News</div><div class="abs" style="left:163px;top:215px;width:942px;height:600px;background:#fff;border-radius:8px"></div><div class="abs" style="left:232px;top:248px;width:820px;font-size:37px;line-height:64px;color:#3a3a3a;white-space:nowrap">Screenshot Remote - Capture Screenshots<br>on PC &amp; Mac using your Phone or Tablet</div><div class="abs" style="left:232px;top:393.0px;width:805px;font-size:15px;line-height:27.5px;color:#222;-webkit-text-stroke:.6px #222;white-space:nowrap;text-align:justify;text-align-last:justify;"><b>Screenshot Remote</b> revolutionizes the way we interact with our devices, providing a seamless and</div><div class="abs" style="left:232px;top:420.5px;width:805px;font-size:15px;line-height:27.5px;color:#222;-webkit-text-stroke:.6px #222;white-space:nowrap;text-align:justify;text-align-last:justify;">secure method to capture and manage screenshots across various platforms. It enables users to take</div><div class="abs" style="left:232px;top:448.0px;width:805px;font-size:15px;line-height:27.5px;color:#222;-webkit-text-stroke:.6px #222;white-space:nowrap;text-align:justify;text-align-last:justify;">screenshots on remote computers using their phone, tablet, or another computer via a local network</div><div class="abs" style="left:232px;top:475.5px;width:805px;font-size:15px;line-height:27.5px;color:#222;-webkit-text-stroke:.6px #222;white-space:nowrap;text-align:justify;text-align-last:justify;">connection or Wi-Fi. This offers unparalleled convenience and flexibility for different use cases for both</div><div class="abs" style="left:232px;top:503.0px;width:805px;font-size:15px;line-height:27.5px;color:#222;-webkit-text-stroke:.6px #222;white-space:nowrap;">home and business scenarios.</div><div class="abs" style="left:1262px;top:107px;width:18px;height:693px;background:#efefef"></div><div class="abs" style="left:1264px;top:113px;width:11px;height:211px;background:#b4b4b4;border-radius:5px"></div></div></div>
    <div class="thumb" id="t8" style="left:263px;top:592px;width:213px;height:132px;background:#888"><div class="abs" style="left:0;top:0;width:1280px;height:800px;transform:scale(0.165625);transform-origin:0 0"><svg class="abs" style="left:0;top:0" width="1280" height="800" viewBox="0 0 1280 800"><use href="#wall" width="1280" height="800"/></svg><div class="abs" style="left:0;top:0;width:1280px;height:24px;background:linear-gradient(90deg,#bd5b92 0%,#ae58a6 30%,#9e56c0 50%,#8e48cc 75%,#8a40d6 100%);color:#fff;font-size:13.5px;line-height:24px"><div class="abs" style="left:21px;top:5px;width:13px;height:14px;border-radius:50% 50% 45% 45%;background:#fff"></div><span class="abs" style="left:54px;font-weight:bold">Screenshot Remote</span><span class="abs" style="left:210px">Edit</span><span class="abs" style="left:262px">View</span><span class="abs" style="left:314px">Window</span><span class="abs" style="left:382px">Help</span><div class="abs" style="left:970px;top:5px;width:16px;height:14px;border:2px solid #fff;border-radius:3px"></div><div class="abs" style="left:1005px;top:5px;width:16px;height:14px;border:2px solid #fff;border-radius:3px"></div><div class="abs" style="left:1040px;top:5px;width:16px;height:14px;border:2px solid #fff;border-radius:3px"></div><div class="abs" style="left:1075px;top:4px;width:22px;height:16px;border-radius:3px;background:#fff"></div><div class="abs" style="left:1118px;top:5px;width:14px;height:14px;border-radius:4px;background:#fff"></div><span class="abs" style="left:1150px">Sat 25 May&nbsp;&nbsp;16:33</span></div><div class="abs" style="left:240px;top:62px;width:790px;height:740px;border-radius:10px;overflow:hidden;background:#fdf8fd;box-shadow:0 8px 30px rgba(0,0,0,.35);"><div class="abs" style="left:0;top:0;width:790px;height:28px;background:#f3f3f0;border-bottom:1px solid #d8d6dc"></div><div class="abs" style="left:8px;top:8px;width:12px;height:12px;border-radius:50%;background:#ec6a5e"></div><div class="abs" style="left:28px;top:8px;width:12px;height:12px;border-radius:50%;background:#eec82c"></div><div class="abs" style="left:48px;top:8px;width:12px;height:12px;border-radius:50%;background:#4fd33c"></div><div class="abs" style="left:0;top:6px;width:790px;text-align:center;font-weight:bold;font-size:13.4px;color:#3b3b3b">Screenshot Remote</div><div class="abs" style="left:0;top:29px;width:220px;height:711px;background:#f1eff9"></div><div class="abs" style="left:12px;top:96px;width:196px;height:56px;border-radius:28px;background:#e0dcf6"></div><div class="abs" style="left:30px;top:59px;width:19px;height:17px;border:2px solid #2a2834;border-radius:3px;"></div><div class="abs" style="left:64px;top:59px;font-size:15.3px;line-height:18px;color:#1d1b24">Capture</div><div class="abs" style="left:30px;top:115px;width:19px;height:17px;border:2px solid #2a2834;border-radius:3px;background:#1c1a30;"></div><div class="abs" style="left:64px;top:115px;font-size:15.3px;line-height:18px;color:#1d1b24">Gallery</div><div class="abs" style="left:30px;top:171px;width:19px;height:17px;border:2px solid #2a2834;border-radius:3px;"></div><div class="abs" style="left:64px;top:171px;font-size:15.3px;line-height:18px;color:#1d1b24">Devices</div><div class="abs" style="left:30px;top:263px;width:19px;height:17px;border:2px solid #2a2834;border-radius:3px;"></div><div class="abs" style="left:64px;top:263px;font-size:15.3px;line-height:18px;color:#1d1b24">Settings</div><div class="abs" style="left:30px;top:319px;width:19px;height:17px;border:2px solid #2a2834;border-radius:3px;"></div><div class="abs" style="left:64px;top:319px;font-size:15.3px;line-height:18px;color:#1d1b24">About</div><div class="abs" style="left:28px;top:225px;width:164px;height:2px;background:#d2cfda"></div><div class="abs" style="left:235px;top:43px;width:52px;height:38px;border-radius:8px;background:#dedcf6;font-size:14.5px;line-height:38px;text-align:center;color:#1d1b24">All</div><div class="abs" style="left:294px;top:43px;width:114px;height:38px;border-radius:8px;border:1px solid #79747e;font-size:14.5px;line-height:36px;text-align:center;color:#1d1b24">&#9638; As12-P1</div><div class="abs" style="left:415px;top:43px;width:139px;height:38px;border-radius:8px;border:1px solid #79747e;font-size:14.5px;line-height:36px;text-align:center;color:#1d1b24">&#9679; This Device</div><div class="abs" style="left:569px;top:43px;width:97px;height:38px;border-radius:8px;border:1px solid #79747e;font-size:14.5px;line-height:36px;text-align:center;color:#1d1b24">&#9641; Trash</div><div class="abs" style="left:290px;top:113px;width:155px;height:243px;overflow:hidden"><div class="abs" style="left:0px;top:0px;width:155px;height:243px;background:#161618;border:2px solid #3a3a3a"></div><div class="abs" style="left:0px;top:0px;width:155px;height:7px;background:#222"></div><div class="abs" style="left:15px;top:29px;width:108px;height:2px;background:#5a5a60"></div><div class="abs" style="left:15px;top:50px;width:108px;height:2px;background:#5a5a60"></div><div class="abs" style="left:15px;top:71px;width:108px;height:2px;background:#5a5a60"></div><div class="abs" style="left:15px;top:92px;width:108px;height:2px;background:#5a5a60"></div><div class="abs" style="left:15px;top:113px;width:108px;height:2px;background:#5a5a60"></div><div class="abs" style="left:15px;top:134px;width:108px;height:2px;background:#5a5a60"></div><div class="abs" style="left:15px;top:155px;width:108px;height:2px;background:#5a5a60"></div><div class="abs" style="left:15px;top:176px;width:54px;height:2px;background:#5a5a60"></div></div><div class="abs" style="left:515px;top:135px;width:248px;height:195px;overflow:hidden"><div class="abs" style="left:0px;top:0px;width:248px;height:195px;background:#161618;border:2px solid #3a3a3a"></div><div class="abs" style="left:0px;top:0px;width:248px;height:5px;background:#111"></div><div class="abs" style="left:24px;top:23px;width:173px;height:2px;background:#5a5a60"></div><div class="abs" style="left:24px;top:40px;width:173px;height:2px;background:#5a5a60"></div><div class="abs" style="left:24px;top:57px;width:173px;height:2px;background:#5a5a60"></div><div class="abs" style="left:24px;top:74px;width:173px;height:2px;background:#5a5a60"></div><div class="abs" style="left:24px;top:91px;width:173px;height:2px;background:#5a5a60"></div><div class="abs" style="left:24px;top:108px;width:173px;height:2px;background:#5a5a60"></div><div class="abs" style="left:24px;top:125px;width:173px;height:2px;background:#5a5a60"></div><div class="abs" style="left:24px;top:142px;width:86px;height:2px;background:#5a5a60"></div></div><div class="abs" style="left:243px;top:398px;width:247px;height:200px;overflow:hidden"><div class="abs" style="left:0px;top:0px;width:247px;height:200px;background:#161618;border:2px solid #3a3a3a"></div><div class="abs" style="left:0px;top:0px;width:247px;height:6px;background:#5a20c0"></div><div class="abs" style="left:24px;top:24px;width:172px;height:2px;background:#5a5a60"></div><div class="abs" style="left:24px;top:42px;width:172px;height:2px;background:#5a5a60"></div><div class="abs" style="left:24px;top:60px;width:172px;height:2px;background:#5a5a60"></div><div class="abs" style="left:24px;top:78px;width:172px;height:2px;background:#5a5a60"></div><div class="abs" style="left:24px;top:96px;width:172px;height:2px;background:#5a5a60"></div><div class="abs" style="left:24px;top:114px;width:172px;height:2px;background:#5a5a60"></div><div class="abs" style="left:24px;top:132px;width:172px;height:2px;background:#5a5a60"></div><div class="abs" style="left:24px;top:150px;width:86px;height:2px;background:#5a5a60"></div></div><div class="abs" style="left:718px;top:668px;width:56px;height:56px;border-radius:50%;background:#e3e1ee;box-shadow:0 3px 8px rgba(0,0,0,.3)"></div></div></div></div>
    <div class="thumb" id="t9" style="left:500px;top:592px;width:212px;height:132px;background:#fdf8fd"><div class="abs" style="left:0;top:0;width:1280px;height:800px;transform:scale(0.165625);transform-origin:0 0"><div class="abs" style="left:0;top:0;width:1280px;height:24px;background:linear-gradient(90deg,#b020a0,#9a10d8);color:#fff;font-size:13.5px;line-height:24px"><div class="abs" style="left:21px;top:5px;width:13px;height:14px;border-radius:50% 50% 45% 45%;background:#fff"></div><span class="abs" style="left:54px;font-weight:bold">Screenshot Remote</span><span class="abs" style="left:210px">Edit</span><span class="abs" style="left:262px">View</span><span class="abs" style="left:314px">Window</span><span class="abs" style="left:382px">Help</span><div class="abs" style="left:970px;top:5px;width:16px;height:14px;border:2px solid #fff;border-radius:3px"></div><div class="abs" style="left:1005px;top:5px;width:16px;height:14px;border:2px solid #fff;border-radius:3px"></div><div class="abs" style="left:1040px;top:5px;width:16px;height:14px;border:2px solid #fff;border-radius:3px"></div><div class="abs" style="left:1075px;top:4px;width:22px;height:16px;border-radius:3px;background:#fff"></div><div class="abs" style="left:1118px;top:5px;width:14px;height:14px;border-radius:4px;background:#fff"></div><span class="abs" style="left:1150px">Sat 25 May&nbsp;&nbsp;16:33</span></div><div class="abs" style="left:0px;top:24px;width:1280px;height:776px;border-radius:0px;overflow:hidden;background:#fdf8fd;"><div class="abs" style="left:0;top:0;width:1280px;height:28px;background:#f3f3f0;border-bottom:1px solid #d8d6dc"></div><div class="abs" style="left:8px;top:8px;width:12px;height:12px;border-radius:50%;background:#ec6a5e"></div><div class="abs" style="left:28px;top:8px;width:12px;height:12px;border-radius:50%;background:#eec82c"></div><div class="abs" style="left:48px;top:8px;width:12px;height:12px;border-radius:50%;background:#4fd33c"></div><div class="abs" style="left:0;top:6px;width:1280px;text-align:center;font-weight:bold;font-size:13.4px;color:#3b3b3b">Screenshot Remote</div><div class="abs" style="left:0;top:29px;width:220px;height:747px;background:#f1eff9"></div><div class="abs" style="left:12px;top:96px;width:196px;height:56px;border-radius:28px;background:#e0dcf6"></div><div class="abs" style="left:30px;top:59px;width:19px;height:17px;border:2px solid #2a2834;border-radius:3px;"></div><div class="abs" style="left:64px;top:59px;font-size:15.3px;line-height:18px;color:#1d1b24">Capture</div><div class="abs" style="left:30px;top:115px;width:19px;height:17px;border:2px solid #2a2834;border-radius:3px;background:#1c1a30;"></div><div class="abs" style="left:64px;top:115px;font-size:15.3px;line-height:18px;color:#1d1b24">Gallery</div><div class="abs" style="left:30px;top:171px;width:19px;height:17px;border:2px solid #2a2834;border-radius:3px;"></div><div class="abs" style="left:64px;top:171px;font-size:15.3px;line-height:18px;color:#1d1b24">Devices</div><div class="abs" style="left:30px;top:263px;width:19px;height:17px;border:2px solid #2a2834;border-radius:3px;"></div><div class="abs" style="left:64px;top:263px;font-size:15.3px;line-height:18px;color:#1d1b24">Settings</div><div class="abs" style="left:30px;top:319px;width:19px;height:17px;border:2px solid #2a2834;border-radius:3px;"></div><div class="abs" style="left:64px;top:319px;font-size:15.3px;line-height:18px;color:#1d1b24">About</div><div class="abs" style="left:28px;top:225px;width:164px;height:2px;background:#d2cfda"></div><div class="abs" style="left:235px;top:43px;width:52px;height:38px;border-radius:8px;background:#dedcf6;font-size:14.5px;line-height:38px;text-align:center;color:#1d1b24">All</div><div class="abs" style="left:294px;top:43px;width:114px;height:38px;border-radius:8px;border:1px solid #79747e;font-size:14.5px;line-height:36px;text-align:center;color:#1d1b24">&#9638; As12-P1</div><div class="abs" style="left:415px;top:43px;width:139px;height:38px;border-radius:8px;border:1px solid #79747e;font-size:14.5px;line-height:36px;text-align:center;color:#1d1b24">&#9679; This Device</div><div class="abs" style="left:569px;top:43px;width:97px;height:38px;border-radius:8px;border:1px solid #79747e;font-size:14.5px;line-height:36px;text-align:center;color:#1d1b24">&#9641; Trash</div><div class="abs" style="left:292px;top:114px;width:144px;height:227px;overflow:hidden"><div class="abs" style="left:0px;top:0px;width:144px;height:227px;background:#161618;border:2px solid #3a3a3a"></div><div class="abs" style="left:0px;top:0px;width:144px;height:6px;background:#222"></div><div class="abs" style="left:14px;top:27px;width:100px;height:2px;background:#5a5a60"></div><div class="abs" style="left:14px;top:47px;width:100px;height:2px;background:#5a5a60"></div><div class="abs" style="left:14px;top:67px;width:100px;height:2px;background:#5a5a60"></div><div class="abs" style="left:14px;top:87px;width:100px;height:2px;background:#5a5a60"></div><div class="abs" style="left:14px;top:107px;width:100px;height:2px;background:#5a5a60"></div><div class="abs" style="left:14px;top:127px;width:100px;height:2px;background:#5a5a60"></div><div class="abs" style="left:14px;top:147px;width:100px;height:2px;background:#5a5a60"></div><div class="abs" style="left:14px;top:167px;width:50px;height:2px;background:#5a5a60"></div></div><div class="abs" style="left:503px;top:134px;width:232px;height:182px;overflow:hidden"><div class="abs" style="left:0px;top:0px;width:232px;height:182px;background:#161618;border:2px solid #3a3a3a"></div><div class="abs" style="left:0px;top:0px;width:232px;height:5px;background:#111"></div><div class="abs" style="left:23px;top:21px;width:162px;height:2px;background:#5a5a60"></div><div class="abs" style="left:23px;top:37px;width:162px;height:2px;background:#5a5a60"></div><div class="abs" style="left:23px;top:53px;width:162px;height:2px;background:#5a5a60"></div><div class="abs" style="left:23px;top:69px;width:162px;height:2px;background:#5a5a60"></div><div class="abs" style="left:23px;top:85px;width:162px;height:2px;background:#5a5a60"></div><div class="abs" style="left:23px;top:101px;width:162px;height:2px;background:#5a5a60"></div><div class="abs" style="left:23px;top:117px;width:162px;height:2px;background:#5a5a60"></div><div class="abs" style="left:23px;top:133px;width:81px;height:2px;background:#5a5a60"></div></div><div class="abs" style="left:760px;top:128px;width:230px;height:196px;overflow:hidden"><div class="abs" style="left:0px;top:0px;width:230px;height:196px;background:#2a2a2e;border-top:5px solid #6020d0"></div><div class="abs" style="left:0px;top:0px;width:60px;height:196px;background:#353538"></div></div><div class="abs" style="left:1015px;top:253px;width:200px;height:42px;background:#111"></div><div class="abs" style="left:250px;top:411px;width:228px;height:200px;overflow:hidden"><div class="abs" style="left:0px;top:0px;width:228px;height:200px;background:#161618;border:2px solid #3a3a3a"></div><div class="abs" style="left:0px;top:0px;width:228px;height:6px;background:#5a20c0"></div><div class="abs" style="left:22px;top:24px;width:159px;height:2px;background:#5a5a60"></div><div class="abs" style="left:22px;top:42px;width:159px;height:2px;background:#5a5a60"></div><div class="abs" style="left:22px;top:60px;width:159px;height:2px;background:#5a5a60"></div><div class="abs" style="left:22px;top:78px;width:159px;height:2px;background:#5a5a60"></div><div class="abs" style="left:22px;top:96px;width:159px;height:2px;background:#5a5a60"></div><div class="abs" style="left:22px;top:114px;width:159px;height:2px;background:#5a5a60"></div><div class="abs" style="left:22px;top:132px;width:159px;height:2px;background:#5a5a60"></div><div class="abs" style="left:22px;top:150px;width:79px;height:2px;background:#5a5a60"></div></div><div class="abs" style="left:1208px;top:704px;width:56px;height:56px;border-radius:50%;background:#e3e1ee;box-shadow:0 3px 8px rgba(0,0,0,.3)"></div></div></div></div>
  </div>
  <div class="fab"><svg class="abs" style="left:16px;top:15px" width="26" height="26" viewBox="0 0 26 26"><circle cx="9.6" cy="10.4" r="5.8" fill="none" stroke="#1e1d2c" stroke-width="1.9"/><path d="M13.9 14.6 L19.9 20.4" stroke="#1e1d2c" stroke-width="2.5"/><path d="M9.6 7.8 V13 M7 10.4 H12.2" stroke="#1e1d2c" stroke-width="1.5"/></svg></div>
</div>
</body></html>
